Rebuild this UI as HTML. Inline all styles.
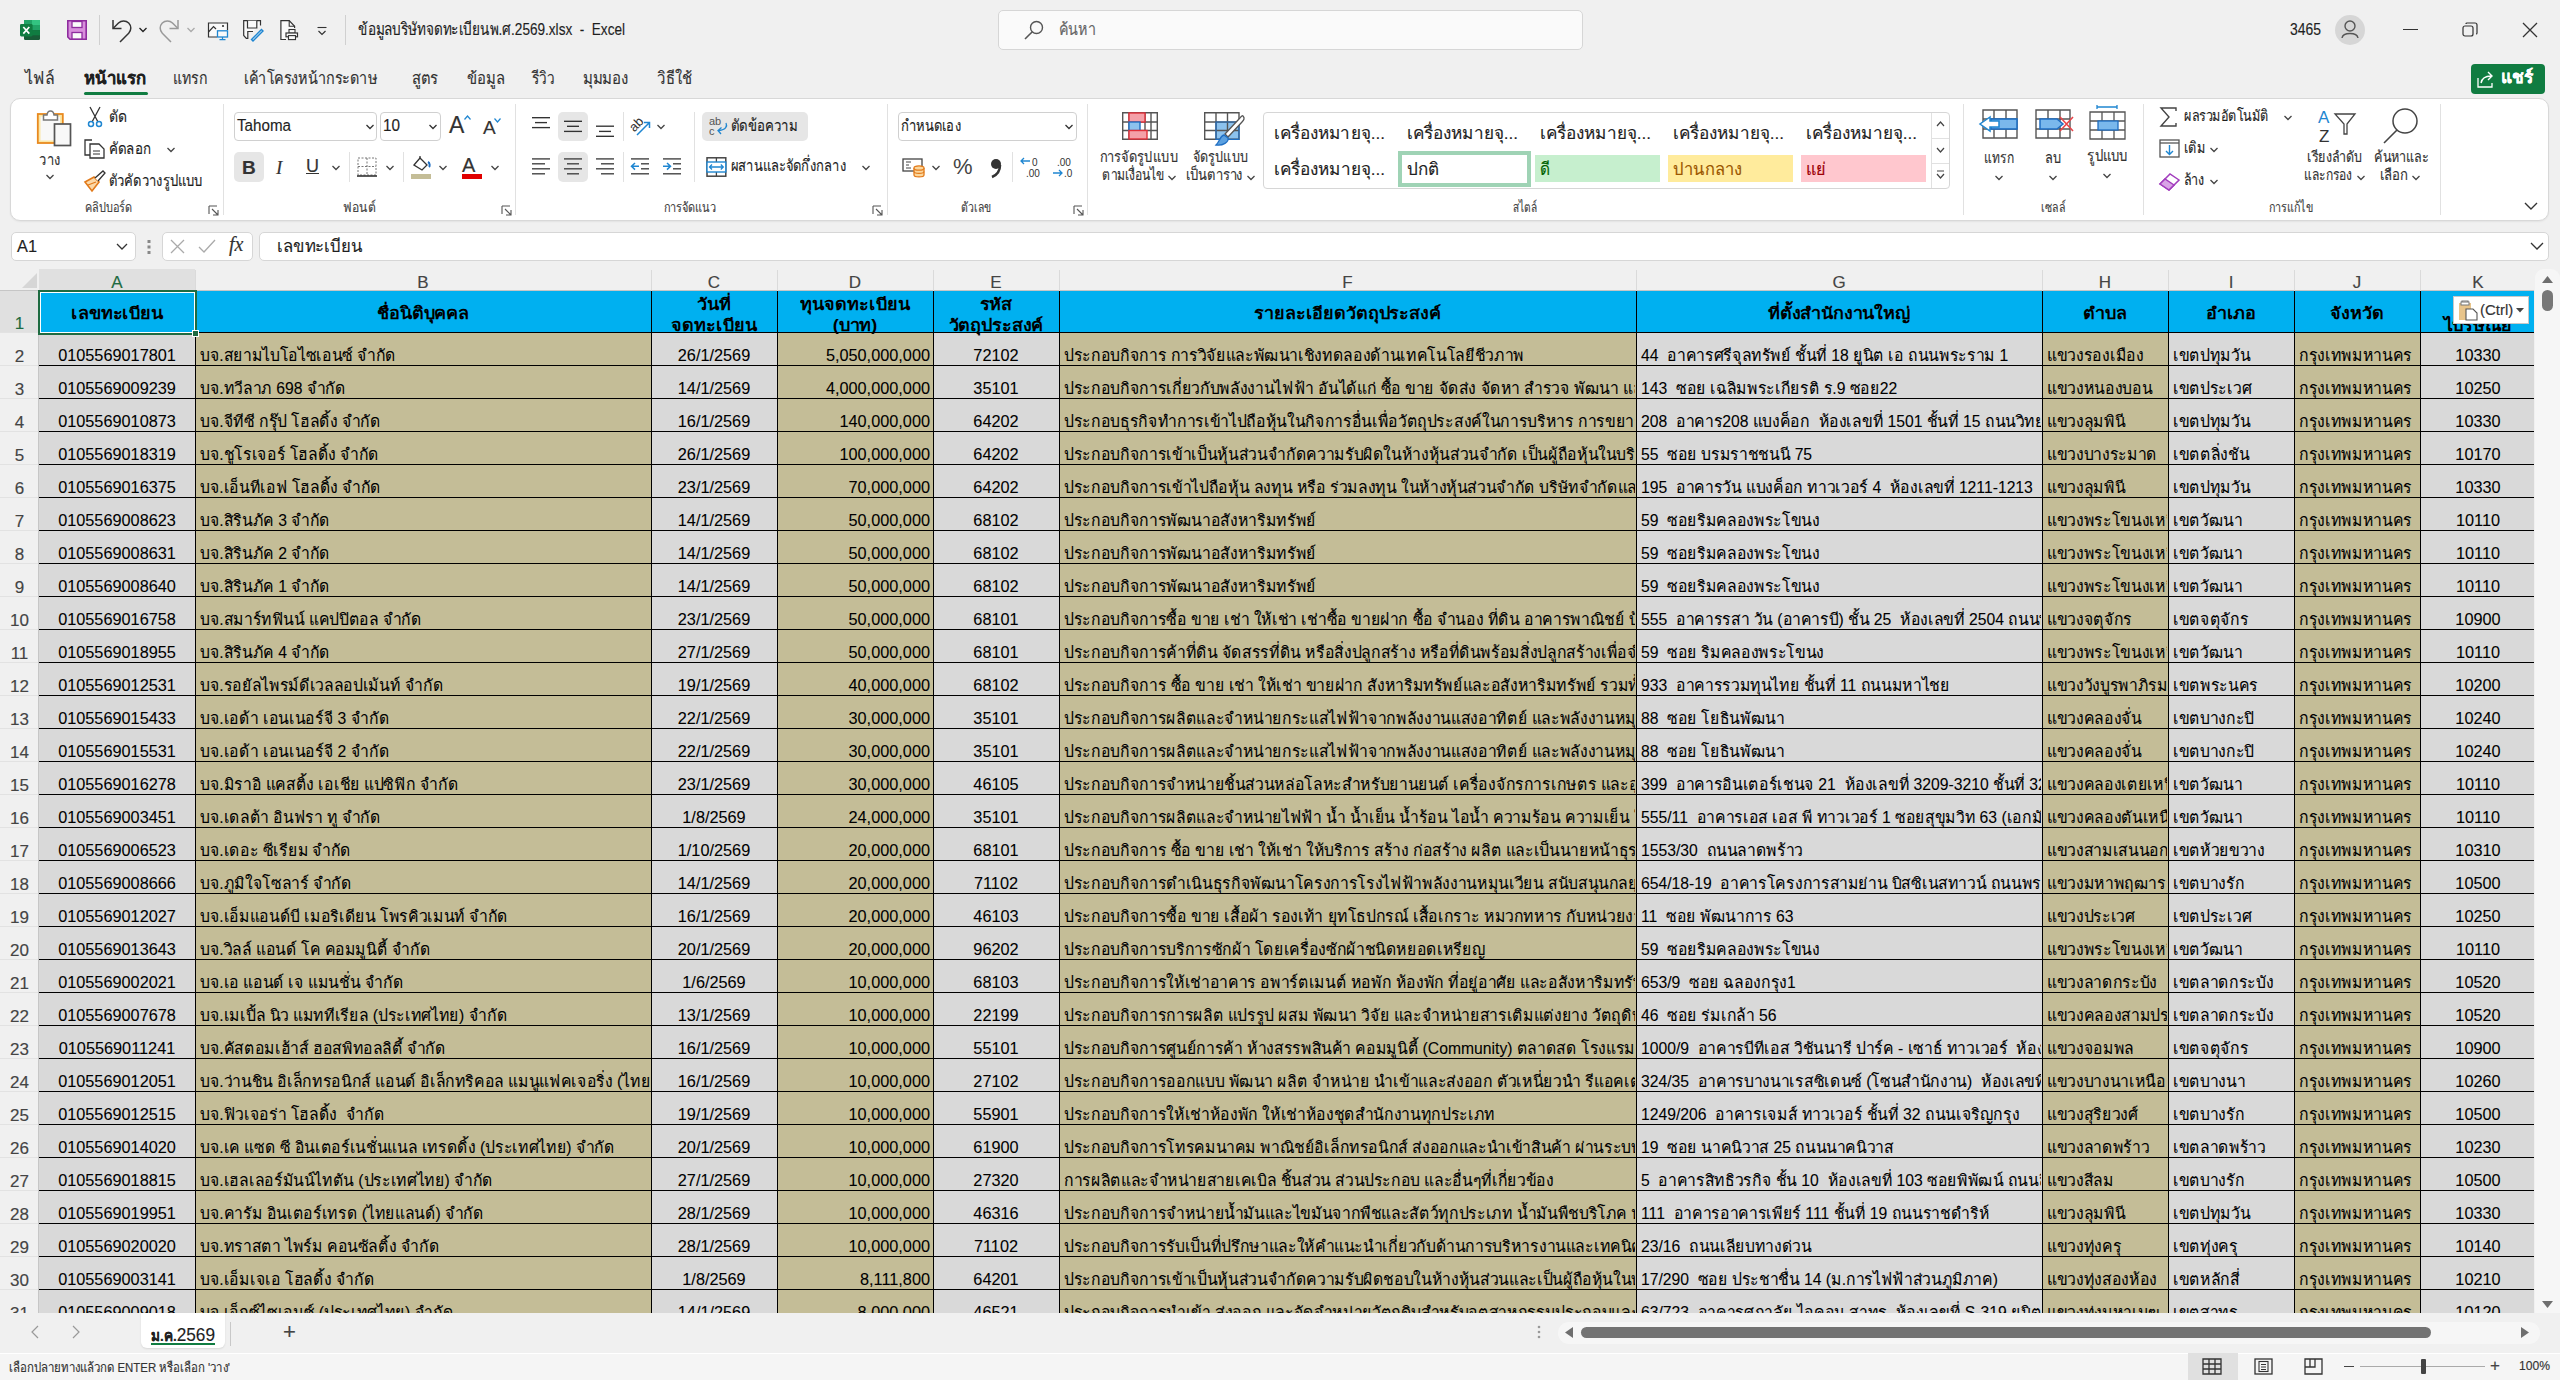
<!DOCTYPE html><html><head><meta charset="utf-8"><style>
*{box-sizing:border-box;margin:0;padding:0}
html,body{width:2560px;height:1380px;overflow:hidden;background:#f0f0f0;font-family:"Liberation Sans", sans-serif;color:#1f1f1f}
.ab{position:absolute}
.t{position:absolute;white-space:nowrap;line-height:1;-webkit-text-stroke:0.15px currentColor}
.grid{position:absolute;left:0;top:0;width:2560px;height:1380px;overflow:hidden}
.c{position:absolute;overflow:hidden;white-space:nowrap;font-size:16.3px;line-height:1;color:#000;padding:0 3px}
.c span{position:absolute;bottom:2px;white-space:pre;-webkit-text-stroke:0.08px #000}
svg{position:absolute;overflow:visible}

</style></head><body>
<svg style="left:20px;top:20px;" width="21" height="20" viewBox="0 0 21 20"><rect x="4" y="0" width="16" height="20" rx="1.2" fill="#185c37"/><rect x="4" y="0" width="16" height="5" fill="#33c481"/><rect x="4" y="0" width="8" height="5" fill="#21a366"/><rect x="4" y="5" width="16" height="5.3" fill="#21a366"/><rect x="4" y="10.3" width="16" height="5" fill="#107c41"/><rect x="0" y="4" width="12.6" height="12.4" rx="1.3" fill="#107c41"/><path d="M3.3 7 L9.3 13.6 M9.3 7 L3.3 13.6" stroke="#fff" stroke-width="1.7"/></svg>
<svg style="left:67px;top:20px;" width="20" height="20" viewBox="0 0 20 20"><path d="M0.8 0.8 H19.2 V19.2 H3 L0.8 17 Z" fill="#d88fdc" stroke="#8e2c9e" stroke-width="1.6"/><rect x="5" y="1.5" width="10" height="6" fill="#fafafa" stroke="#8e2c9e" stroke-width="1.3"/><rect x="5" y="12.5" width="10" height="6.5" fill="#fafafa" stroke="#8e2c9e" stroke-width="1.3"/></svg>
<div class="ab" style="left:99px;top:15px;width:1px;height:30px;background:#d0d0d0"></div>
<svg style="left:110px;top:18px;" width="24" height="24" viewBox="0 0 24 24"><path d="M3 2 V10.5 H11.5" fill="none" stroke="#333" stroke-width="1.5"/><path d="M3.5 10 L8.5 5 A7.2 7.2 0 0 1 18.7 15.2 L10 24" fill="none" stroke="#333" stroke-width="1.5"/></svg>
<svg style="left:138px;top:27px;" width="10" height="6" viewBox="0 0 10 6"><path d="M1.5 1 L5 4.5 L8.5 1" fill="none" stroke="#222" stroke-width="1.3"/></svg>
<svg style="left:157px;top:18px;" width="24" height="24" viewBox="0 0 24 24"><path d="M21 2 V10.5 H12.5" fill="none" stroke="#999" stroke-width="1.5"/><path d="M20.5 10 L15.5 5 A7.2 7.2 0 0 0 5.3 15.2 L14 24" fill="none" stroke="#999" stroke-width="1.5"/></svg>
<svg style="left:186px;top:27px;" width="10" height="6" viewBox="0 0 10 6"><path d="M1.5 1 L5 4.5 L8.5 1" fill="none" stroke="#aaa" stroke-width="1.3"/></svg>
<svg style="left:207px;top:20px;" width="22" height="21" viewBox="0 0 22 21"><path d="M10 17 H1.5 V3 H20.5 V10" fill="#fafafa" stroke="#333" stroke-width="1.2"/><path d="M1.5 12 L6.5 6.5 L9 9" fill="none" stroke="#333" stroke-width="1.2"/><circle cx="16" cy="6" r="1.1" fill="#333"/><rect x="10.5" y="10.8" width="10" height="6.2" fill="#fafafa" stroke="#1f86d1" stroke-width="1.3"/><path d="M15.5 17 V19.3 M12.5 19.6 H18.5" stroke="#1f86d1" stroke-width="1.2"/></svg>
<svg style="left:243px;top:20px;" width="21" height="21" viewBox="0 0 21 21"><path d="M17.5 5.5 V0.7 H0.7 V15.5 L3.3 18.3 H4.8 V11.5 H10" fill="#fafafa" stroke="#333" stroke-width="1.2"/><path d="M4.5 0.7 V8 H13.8 V0.7" fill="#fafafa" stroke="#333" stroke-width="1.2"/><path d="M8.5 19.5 L18.5 9.5 L20 11 L10 21 Z" fill="#cfe6f7" stroke="#1f86d1" stroke-width="1.4"/></svg>
<svg style="left:280px;top:20px;" width="19" height="21" viewBox="0 0 19 21"><path d="M6 19.5 H0.9 V0.6 H9.2 L14.6 6.3 V8" fill="#fafafa" stroke="#333" stroke-width="1.2"/><path d="M9.2 0.6 V6.3 H14.6" fill="none" stroke="#333" stroke-width="1.1"/><rect x="9" y="9.5" width="6" height="3.7" fill="#fafafa" stroke="#333" stroke-width="1.1"/><rect x="6" y="13" width="11.5" height="3.8" fill="#fafafa" stroke="#333" stroke-width="1.2"/><rect x="8.5" y="15.6" width="7" height="4" fill="#fafafa" stroke="#333" stroke-width="1.1"/></svg>
<svg style="left:317px;top:26px;" width="10" height="10" viewBox="0 0 10 10"><path d="M0.5 1.5 H9.5" stroke="#333" stroke-width="1.1"/><path d="M1.5 5 L5 8.5 L8.5 5" fill="none" stroke="#333" stroke-width="1.2"/></svg>
<div class="ab" style="left:345px;top:15px;width:1px;height:30px;background:#d0d0d0"></div>
<div id="t1" class="t" style="left:358px;top:21px;font-size:17px;color:#1f1f1f;font-weight:normal;transform:scaleX(0.7985);transform-origin:0 0;">ข้อมูลบริษัทจดทะเบียนพ.ศ.2569.xlsx&nbsp; -&nbsp; Excel</div>
<div class="ab" style="left:998px;top:10px;width:585px;height:40px;background:#fafafa;border:1px solid #d6d6d6;border-radius:5px"></div>
<svg style="left:1024px;top:20px;" width="20" height="20" viewBox="0 0 20 20"><circle cx="12.5" cy="7.5" r="6" fill="none" stroke="#555" stroke-width="1.4"/><path d="M8.3 11.7 L1 19" stroke="#555" stroke-width="1.6"/></svg>
<div id="t2" class="t" style="left:1059px;top:21px;font-size:17px;color:#666;font-weight:normal;transform:scaleX(0.8409);transform-origin:0 0;">ค้นหา</div>
<div id="t3" class="t" style="left:2290px;top:21px;font-size:17px;color:#1f1f1f;font-weight:normal;transform:scaleX(0.8195);transform-origin:0 0;">3465</div>
<svg style="left:2335px;top:15px;" width="30" height="30" viewBox="0 0 30 30"><circle cx="15" cy="15" r="15" fill="#d6d6d6"/><circle cx="15" cy="11" r="5" fill="none" stroke="#555" stroke-width="1.4"/><path d="M7 23 C8 17 22 17 23 23" fill="none" stroke="#555" stroke-width="1.4"/></svg>
<div class="ab" style="left:2403px;top:29px;width:15px;height:1.2px;background:#333"></div>
<svg style="left:2462px;top:22px;" width="16" height="16" viewBox="0 0 16 16"><rect x="1" y="4" width="10" height="10" rx="2" fill="none" stroke="#333" stroke-width="1.2"/><path d="M4 2 Q4 1 5 1 H13 Q15 1 15 3 V11 Q15 12 14 12" fill="none" stroke="#333" stroke-width="1.2"/></svg>
<svg style="left:2522px;top:22px;" width="16" height="16" viewBox="0 0 16 16"><path d="M1 1 L15 15 M15 1 L1 15" stroke="#333" stroke-width="1.3"/></svg>
<div id="t4" class="t" style="left:25px;top:70px;font-size:17px;color:#333;font-weight:normal;transform:scaleX(0.9354);transform-origin:0 0;">ไฟล์</div>
<div id="t5" class="t" style="left:84px;top:70px;font-size:17px;color:#1f1f1f;font-weight:bold;transform:scaleX(0.9841);transform-origin:0 0;">หน้าแรก</div>
<div id="t6" class="t" style="left:173px;top:70px;font-size:17px;color:#333;font-weight:normal;transform:scaleX(0.8293);transform-origin:0 0;">แทรก</div>
<div id="t7" class="t" style="left:244px;top:70px;font-size:17px;color:#333;font-weight:normal;transform:scaleX(0.8471);transform-origin:0 0;">เค้าโครงหน้ากระดาษ</div>
<div id="t8" class="t" style="left:412px;top:70px;font-size:17px;color:#333;font-weight:normal;transform:scaleX(0.8667);transform-origin:0 0;">สูตร</div>
<div id="t9" class="t" style="left:467px;top:70px;font-size:17px;color:#333;font-weight:normal;transform:scaleX(0.8721);transform-origin:0 0;">ข้อมูล</div>
<div id="t10" class="t" style="left:532px;top:70px;font-size:17px;color:#333;font-weight:normal;transform:scaleX(0.7931);transform-origin:0 0;">รีวิว</div>
<div id="t11" class="t" style="left:583px;top:70px;font-size:17px;color:#333;font-weight:normal;transform:scaleX(0.8823);transform-origin:0 0;">มุมมอง</div>
<div id="t12" class="t" style="left:657px;top:70px;font-size:17px;color:#333;font-weight:normal;transform:scaleX(0.8750);transform-origin:0 0;">วิธีใช้</div>
<div class="ab" style="left:84px;top:92px;width:64px;height:3px;background:#107c41;border-radius:2px"></div>
<div class="ab" style="left:2471px;top:64px;width:74px;height:30px;background:#107c41;border-radius:4px"></div>
<svg style="left:2477px;top:71px;" width="18" height="17" viewBox="0 0 18 17"><path d="M1 7 V16 H15 V12" fill="none" stroke="#fff" stroke-width="1.3"/><path d="M4 12 C5 7 9 5 14 5 M11 1 L15 5 L11 9" fill="none" stroke="#fff" stroke-width="1.4"/></svg>
<div id="t13" class="t" style="left:2501px;top:69px;font-size:17px;color:#fff;font-weight:bold;transform:scaleX(1.0156);transform-origin:0 0;">แชร์</div>
<div class="ab" style="left:10px;top:98px;width:2539px;height:123px;background:#fff;border:1px solid #d8d8d8;border-radius:10px;box-shadow:0 1px 2px rgba(0,0,0,0.06)"></div>
<div class="ab" style="left:223px;top:104px;width:1px;height:111px;background:#e1e1e1"></div>
<div class="ab" style="left:515px;top:104px;width:1px;height:111px;background:#e1e1e1"></div>
<div class="ab" style="left:887px;top:104px;width:1px;height:111px;background:#e1e1e1"></div>
<div class="ab" style="left:1087px;top:104px;width:1px;height:111px;background:#e1e1e1"></div>
<div class="ab" style="left:1963px;top:104px;width:1px;height:111px;background:#e1e1e1"></div>
<div class="ab" style="left:2143px;top:104px;width:1px;height:111px;background:#e1e1e1"></div>
<div class="ab" style="left:2440px;top:104px;width:1px;height:111px;background:#e1e1e1"></div>
<div class="t" style="left:8.0px;top:200px;width:200px;text-align:center;font-size:14px;color:#444;font-weight:normal;"><span id="t14" style="display:inline-block;transform:scaleX(0.7787);transform-origin:50% 0">คลิปบอร์ด</span></div>
<div class="t" style="left:259.0px;top:200px;width:200px;text-align:center;font-size:14px;color:#444;font-weight:normal;"><span id="t15" style="display:inline-block;transform:scaleX(0.8649);transform-origin:50% 0">ฟอนต์</span></div>
<div class="t" style="left:590.0px;top:200px;width:200px;text-align:center;font-size:14px;color:#444;font-weight:normal;"><span id="t16" style="display:inline-block;transform:scaleX(0.7794);transform-origin:50% 0">การจัดแนว</span></div>
<div class="t" style="left:876.0px;top:200px;width:200px;text-align:center;font-size:14px;color:#444;font-weight:normal;"><span id="t17" style="display:inline-block;transform:scaleX(0.7439);transform-origin:50% 0">ตัวเลข</span></div>
<div class="t" style="left:1425.0px;top:200px;width:200px;text-align:center;font-size:14px;color:#444;font-weight:normal;"><span id="t18" style="display:inline-block;transform:scaleX(0.7205);transform-origin:50% 0">สไตล์</span></div>
<div class="t" style="left:1953.0px;top:200px;width:200px;text-align:center;font-size:14px;color:#444;font-weight:normal;"><span id="t19" style="display:inline-block;transform:scaleX(0.7576);transform-origin:50% 0">เซลล์</span></div>
<div class="t" style="left:2191.0px;top:200px;width:200px;text-align:center;font-size:14px;color:#444;font-weight:normal;"><span id="t20" style="display:inline-block;transform:scaleX(0.7673);transform-origin:50% 0">การแก้ไข</span></div>
<svg style="left:208px;top:205px;" width="11" height="11" viewBox="0 0 11 11"><path d="M1 1 H9 M1 1 V9" stroke="#555" stroke-width="1.1" fill="none"/><path d="M4 4 L10 10 M10 5 V10 H5" stroke="#555" stroke-width="1.1" fill="none"/></svg>
<svg style="left:501px;top:205px;" width="11" height="11" viewBox="0 0 11 11"><path d="M1 1 H9 M1 1 V9" stroke="#555" stroke-width="1.1" fill="none"/><path d="M4 4 L10 10 M10 5 V10 H5" stroke="#555" stroke-width="1.1" fill="none"/></svg>
<svg style="left:872px;top:205px;" width="11" height="11" viewBox="0 0 11 11"><path d="M1 1 H9 M1 1 V9" stroke="#555" stroke-width="1.1" fill="none"/><path d="M4 4 L10 10 M10 5 V10 H5" stroke="#555" stroke-width="1.1" fill="none"/></svg>
<svg style="left:1073px;top:205px;" width="11" height="11" viewBox="0 0 11 11"><path d="M1 1 H9 M1 1 V9" stroke="#555" stroke-width="1.1" fill="none"/><path d="M4 4 L10 10 M10 5 V10 H5" stroke="#555" stroke-width="1.1" fill="none"/></svg>
<svg style="left:34px;top:106px;" width="40" height="46" viewBox="0 0 40 46"><rect x="3.8" y="8" width="25" height="29" fill="#fbe7a6" stroke="#e8891f" stroke-width="1.8"/><rect x="6.5" y="10.5" width="19.5" height="24" fill="#f8f8f8"/><path d="M9.5 14 V9 H13 C13.5 3.5 19.5 3.5 20 9 H23.5 V14 Z" fill="#fff" stroke="#777" stroke-width="1.5"/><rect x="20.5" y="18" width="16" height="21.5" fill="#f8f8f8" stroke="#555" stroke-width="1.7"/></svg>
<div class="t" style="left:-50.0px;top:152px;width:200px;text-align:center;font-size:16px;color:#333;font-weight:normal;"><span id="t21" style="display:inline-block;transform:scaleX(0.8077);transform-origin:50% 0">วาง</span></div>
<svg style="left:45px;top:174px;" width="10" height="6" viewBox="0 0 10 6"><path d="M1.5 1 L5 4.5 L8.5 1" fill="none" stroke="#444" stroke-width="1.3"/></svg>
<svg style="left:87px;top:106px;" width="16" height="22" viewBox="0 0 16 22"><path d="M3 1 L11 16 M13 1 L5 16" stroke="#333" stroke-width="1.3"/><circle cx="4" cy="18" r="2.5" fill="none" stroke="#1f86d1" stroke-width="1.5"/><circle cx="12" cy="18" r="2.5" fill="none" stroke="#1f86d1" stroke-width="1.5"/></svg>
<div id="t22" class="t" style="left:109px;top:109px;font-size:16px;color:#1f1f1f;font-weight:normal;transform:scaleX(0.8750);transform-origin:0 0;">ตัด</div>
<svg style="left:84px;top:139px;" width="21" height="20" viewBox="0 0 21 20"><path d="M7 16 H1 V1 H8" fill="none" stroke="#333" stroke-width="1.3"/><path d="M6 5 H15 L20 10 V19 H6 Z" fill="#fff" stroke="#333" stroke-width="1.3"/><path d="M9 12 H16 M9 15 H16" stroke="#333" stroke-width="1"/></svg>
<div id="t23" class="t" style="left:109px;top:141px;font-size:16px;color:#1f1f1f;font-weight:normal;transform:scaleX(0.8333);transform-origin:0 0;">คัดลอก</div>
<svg style="left:166px;top:147px;" width="10" height="6" viewBox="0 0 10 6"><path d="M1.5 1 L5 4.5 L8.5 1" fill="none" stroke="#444" stroke-width="1.3"/></svg>
<svg style="left:84px;top:170px;" width="22" height="22" viewBox="0 0 22 22"><path d="M1 12 L10 7 L15 12 L8 21 Z" fill="#fcd9a8" stroke="#e27a1a" stroke-width="1.6"/><path d="M4 15 L12 12" stroke="#e27a1a" stroke-width="1.2"/><path d="M11 8 L19 1 L21 3 L14 11" fill="#fff" stroke="#333" stroke-width="1.3"/></svg>
<div id="t24" class="t" style="left:109px;top:173px;font-size:16px;color:#1f1f1f;font-weight:normal;transform:scaleX(0.8131);transform-origin:0 0;">ตัวคัดวางรูปแบบ</div>
<div class="ab" style="left:234px;top:112px;width:143px;height:29px;background:#fff;border:1px solid #d0d0d0;border-radius:4px"></div>
<div id="t25" class="t" style="left:237px;top:118px;font-size:16px;color:#1f1f1f;font-weight:normal;transform:scaleX(0.9487);transform-origin:0 0;">Tahoma</div>
<svg style="left:365px;top:124px;" width="10" height="6" viewBox="0 0 10 6"><path d="M1.5 1 L5 4.5 L8.5 1" fill="none" stroke="#333" stroke-width="1.3"/></svg>
<div class="ab" style="left:380px;top:112px;width:61px;height:29px;background:#fff;border:1px solid #d0d0d0;border-radius:4px"></div>
<div id="t26" class="t" style="left:383px;top:118px;font-size:16px;color:#1f1f1f;font-weight:normal;transform:scaleX(0.9552);transform-origin:0 0;">10</div>
<svg style="left:428px;top:124px;" width="10" height="6" viewBox="0 0 10 6"><path d="M1.5 1 L5 4.5 L8.5 1" fill="none" stroke="#333" stroke-width="1.3"/></svg>
<div id="t27" class="t" style="left:449px;top:114px;font-size:23px;color:#333;font-weight:normal;">A</div>
<svg style="left:464px;top:115px;" width="7" height="5" viewBox="0 0 7 5"><path d="M0.5 4.5 L3.5 1 L6.5 4.5" fill="none" stroke="#1f86d1" stroke-width="1.2"/></svg>
<div id="t28" class="t" style="left:483px;top:118px;font-size:19px;color:#333;font-weight:normal;">A</div>
<svg style="left:494px;top:118px;" width="7" height="5" viewBox="0 0 7 5"><path d="M0.5 0.5 L3.5 4 L6.5 0.5" fill="none" stroke="#1f86d1" stroke-width="1.2"/></svg>
<div class="ab" style="left:234px;top:152px;width:30px;height:30px;background:#e6e6e6;border-radius:5px"></div>
<div id="t29" class="t" style="left:242px;top:158px;font-size:19px;color:#333;font-weight:bold;">B</div>
<div id="t30" class="t" style="left:276px;top:158px;font-size:19px;color:#333;font-weight:normal;font-style:italic;font-family:'Liberation Serif',serif">I</div>
<div id="t31" class="t" style="left:306px;top:157px;font-size:18px;color:#333;font-weight:normal;text-decoration:underline">U</div>
<svg style="left:331px;top:165px;" width="10" height="6" viewBox="0 0 10 6"><path d="M1.5 1 L5 4.5 L8.5 1" fill="none" stroke="#444" stroke-width="1.3"/></svg>
<div class="ab" style="left:349px;top:152px;width:1px;height:30px;background:#e1e1e1"></div>
<svg style="left:357px;top:157px;" width="20" height="20" viewBox="0 0 20 20"><rect x="1" y="1" width="18" height="17" fill="none" stroke="#777" stroke-width="1" stroke-dasharray="2 1.5"/><path d="M10 1 V18 M1 9.5 H19" stroke="#777" stroke-width="1" stroke-dasharray="2 1.5"/><path d="M0 19 H20" stroke="#333" stroke-width="1.6"/></svg>
<svg style="left:385px;top:165px;" width="10" height="6" viewBox="0 0 10 6"><path d="M1.5 1 L5 4.5 L8.5 1" fill="none" stroke="#444" stroke-width="1.3"/></svg>
<div class="ab" style="left:403px;top:152px;width:1px;height:30px;background:#e1e1e1"></div>
<svg style="left:411px;top:155px;" width="22" height="19" viewBox="0 0 22 19"><path d="M3 10 L9 3 L16 10 L11 15 Z" fill="#fff" stroke="#333" stroke-width="1.3"/><path d="M9 3 V1" stroke="#333" stroke-width="1.3"/><path d="M17 7 C19 8 19 11 18 12" fill="none" stroke="#1f6ec2" stroke-width="2"/></svg>
<div class="ab" style="left:411px;top:174px;width:20px;height:5px;background:#c4bd97"></div>
<svg style="left:438px;top:165px;" width="10" height="6" viewBox="0 0 10 6"><path d="M1.5 1 L5 4.5 L8.5 1" fill="none" stroke="#444" stroke-width="1.3"/></svg>
<div id="t32" class="t" style="left:462px;top:155px;font-size:20px;color:#333;font-weight:normal;">A</div>
<div class="ab" style="left:462px;top:174px;width:20px;height:5px;background:#e00000"></div>
<svg style="left:490px;top:165px;" width="10" height="6" viewBox="0 0 10 6"><path d="M1.5 1 L5 4.5 L8.5 1" fill="none" stroke="#444" stroke-width="1.3"/></svg>
<div class="ab" style="left:558px;top:112px;width:30px;height:29px;background:#e6e6e6;border-radius:5px"></div>
<svg style="left:0px;top:0px;pointer-events:none" width="2560" height="1380" viewBox="0 0 2560 1380"><path d="M532 117.7 H550" stroke="#333" stroke-width="1.35"/><path d="M535 122.6 H547" stroke="#333" stroke-width="1.35"/><path d="M532 127.6 H550" stroke="#333" stroke-width="1.35"/><path d="M564 121.3 H582" stroke="#333" stroke-width="1.35"/><path d="M567 126.3 H579" stroke="#333" stroke-width="1.35"/><path d="M564 131.4 H582" stroke="#333" stroke-width="1.35"/><path d="M596 126.2 H614" stroke="#333" stroke-width="1.35"/><path d="M599 131.4 H611" stroke="#333" stroke-width="1.35"/><path d="M596 136.3 H614" stroke="#333" stroke-width="1.35"/></svg>
<div class="ab" style="left:623px;top:112px;width:1px;height:29px;background:#e1e1e1"></div>
<svg style="left:628px;top:112px;" width="26" height="26" viewBox="0 0 26 26"><g transform="rotate(-45 9 12)"><text x="1" y="16" font-size="13" font-family="Liberation Sans" fill="#333" style="-webkit-text-stroke:0">ab</text></g><path d="M9 23 L21.5 10.5 M16 10.5 H21.5 V16" fill="none" stroke="#1f86d1" stroke-width="1.5"/></svg>
<svg style="left:656px;top:124px;" width="10" height="6" viewBox="0 0 10 6"><path d="M1.5 1 L5 4.5 L8.5 1" fill="none" stroke="#444" stroke-width="1.3"/></svg>
<div class="ab" style="left:694px;top:112px;width:1px;height:70px;background:#e1e1e1"></div>
<div class="ab" style="left:702px;top:112px;width:106px;height:29px;background:#e6e6e6;border-radius:5px"></div>
<svg style="left:709px;top:116px;" width="20" height="20" viewBox="0 0 20 20"><text x="0" y="9" font-size="11" font-family="Liberation Sans" fill="#555" style="-webkit-text-stroke:0">ab</text><text x="0" y="19" font-size="11" font-family="Liberation Sans" fill="#555" style="-webkit-text-stroke:0">c</text><path d="M17 7 C18.5 10 17 14 10 14.5 M12.5 11.5 L9 14.5 L12 18" fill="none" stroke="#1f86d1" stroke-width="1.3"/></svg>
<div id="t33" class="t" style="left:731px;top:118px;font-size:16px;color:#1f1f1f;font-weight:normal;transform:scaleX(0.8271);transform-origin:0 0;">ตัดข้อความ</div>
<div class="ab" style="left:558px;top:152px;width:30px;height:30px;background:#e6e6e6;border-radius:5px"></div>
<svg style="left:0px;top:0px;pointer-events:none" width="2560" height="1380" viewBox="0 0 2560 1380"><path d="M532 158.9 H550" stroke="#444" stroke-width="1.4"/><path d="M532 163.8 H545" stroke="#444" stroke-width="1.4"/><path d="M532 168.8 H550" stroke="#444" stroke-width="1.4"/><path d="M532 173.8 H545" stroke="#444" stroke-width="1.4"/><path d="M564 158.9 H582" stroke="#444" stroke-width="1.4"/><path d="M567 163.8 H579" stroke="#444" stroke-width="1.4"/><path d="M564 168.8 H582" stroke="#444" stroke-width="1.4"/><path d="M567 173.8 H579" stroke="#444" stroke-width="1.4"/><path d="M596 158.9 H614" stroke="#444" stroke-width="1.4"/><path d="M601 163.8 H614" stroke="#444" stroke-width="1.4"/><path d="M596 168.8 H614" stroke="#444" stroke-width="1.4"/><path d="M601 173.8 H614" stroke="#444" stroke-width="1.4"/><path d="M631 158.9 H649" stroke="#444" stroke-width="1.4"/><path d="M641 163.8 H649" stroke="#444" stroke-width="1.4"/><path d="M641 168.8 H649" stroke="#444" stroke-width="1.4"/><path d="M631 173.8 H649" stroke="#444" stroke-width="1.4"/><path d="M663 158.9 H681" stroke="#444" stroke-width="1.4"/><path d="M673 163.8 H681" stroke="#444" stroke-width="1.4"/><path d="M673 168.8 H681" stroke="#444" stroke-width="1.4"/><path d="M663 173.8 H681" stroke="#444" stroke-width="1.4"/></svg>
<div class="ab" style="left:623px;top:152px;width:1px;height:30px;background:#e1e1e1"></div>
<svg style="left:630px;top:161px;" width="10" height="10" viewBox="0 0 10 10"><path d="M9 5.3 H2 M5 2 L1.5 5.3 L5 8.6" fill="none" stroke="#1f86d1" stroke-width="1.5"/></svg>
<svg style="left:662px;top:161px;" width="10" height="10" viewBox="0 0 10 10"><path d="M1 5.3 H8 M5 2 L8.5 5.3 L5 8.6" fill="none" stroke="#1f86d1" stroke-width="1.5"/></svg>
<svg style="left:706px;top:157px;" width="21" height="20" viewBox="0 0 21 20"><rect x="1" y="0.8" width="18.8" height="18.4" fill="#fff" stroke="#444" stroke-width="1.5"/><path d="M10.4 0.8 V5 M10.4 15 V19" stroke="#444" stroke-width="1.3"/><rect x="1" y="5" width="18.8" height="10" fill="#fff" stroke="#1f86d1" stroke-width="1.4"/><path d="M3.5 10 H17.3 M6 7.5 L3.5 10 L6 12.5 M14.8 7.5 L17.3 10 L14.8 12.5" fill="none" stroke="#1f86d1" stroke-width="1.3"/></svg>
<div id="t34" class="t" style="left:731px;top:158px;font-size:16px;color:#1f1f1f;font-weight:normal;transform:scaleX(0.8098);transform-origin:0 0;">ผสานและจัดกึ่งกลาง</div>
<svg style="left:861px;top:165px;" width="10" height="6" viewBox="0 0 10 6"><path d="M1.5 1 L5 4.5 L8.5 1" fill="none" stroke="#444" stroke-width="1.3"/></svg>
<div class="ab" style="left:898px;top:112px;width:179px;height:29px;background:#fff;border:1px solid #d0d0d0;border-radius:4px"></div>
<div id="t35" class="t" style="left:901px;top:118px;font-size:16px;color:#1f1f1f;font-weight:normal;transform:scaleX(0.8108);transform-origin:0 0;">กำหนดเอง</div>
<svg style="left:1064px;top:124px;" width="10" height="6" viewBox="0 0 10 6"><path d="M1.5 1 L5 4.5 L8.5 1" fill="none" stroke="#333" stroke-width="1.3"/></svg>
<svg style="left:902px;top:156px;" width="24" height="22" viewBox="0 0 24 22"><rect x="1" y="3" width="19" height="12" fill="#fff" stroke="#444" stroke-width="1.3"/><path d="M4 6 H9 M4 9 H7 M4 12 H9" stroke="#444" stroke-width="1"/><path d="M12 12 V19 C12 21.5 22 21.5 22 19 V12" fill="#fbd79d" stroke="#e27a1a" stroke-width="1.3"/><ellipse cx="17" cy="12" rx="5" ry="2.2" fill="#fbd79d" stroke="#e27a1a" stroke-width="1.3"/><path d="M12 15.5 C12 18 22 18 22 15.5" fill="none" stroke="#e27a1a" stroke-width="1.1"/></svg>
<svg style="left:931px;top:165px;" width="10" height="6" viewBox="0 0 10 6"><path d="M1.5 1 L5 4.5 L8.5 1" fill="none" stroke="#444" stroke-width="1.3"/></svg>
<div id="t36" class="t" style="left:953px;top:156px;font-size:22px;color:#444;font-weight:normal;-webkit-text-stroke:0">%</div>
<svg style="left:989px;top:158px;" width="14" height="20" viewBox="0 0 14 20"><circle cx="7" cy="6" r="5" fill="#333"/><path d="M11 7 C11 13 8 17 3 19" fill="none" stroke="#333" stroke-width="2.6"/></svg>
<div class="ab" style="left:1012px;top:152px;width:1px;height:30px;background:#e1e1e1"></div>
<svg style="left:1020px;top:156px;" width="22" height="22" viewBox="0 0 22 22"><path d="M10 5 H1 M4 2 L1 5 L4 8" fill="none" stroke="#1f86d1" stroke-width="1.3"/><text x="12" y="10" font-size="10" font-family="Liberation Sans" fill="#333">0</text><text x="6" y="21" font-size="10" font-family="Liberation Sans" fill="#333">.00</text></svg>
<svg style="left:1052px;top:156px;" width="22" height="22" viewBox="0 0 22 22"><text x="5" y="10" font-size="10" font-family="Liberation Sans" fill="#333">.00</text><path d="M1 17 H10 M7 14 L10 17 L7 20" fill="none" stroke="#1f86d1" stroke-width="1.3"/><text x="12" y="21" font-size="10" font-family="Liberation Sans" fill="#333">.0</text></svg>
<svg style="left:1122px;top:112px;" width="36" height="28" viewBox="0 0 36 28"><path d="M0.7 0.7 H35.3 V27.3 H0.7 Z M0.7 10 H35.3 M0.7 18.5 H35.3 M7 0.7 V27.3 M23 0.7 V27.3 M29 0.7 V27.3" fill="none" stroke="#555" stroke-width="1.4"/><rect x="7" y="1" width="16" height="9" fill="#f4a0a8" stroke="#e0303a" stroke-width="1.4"/><rect x="7" y="10" width="11" height="8.5" fill="#8cc2ee" stroke="#1f6ec2" stroke-width="1.4"/><rect x="7" y="18.5" width="18" height="8.5" fill="#f4a0a8" stroke="#e0303a" stroke-width="1.4"/></svg>
<div class="t" style="left:1084.0px;top:149px;width:110px;text-align:center;font-size:15px;color:#333;font-weight:normal;"><span id="t37" style="display:inline-block;transform:scaleX(0.8532);transform-origin:50% 0">การจัดรูปแบบ</span></div>
<div class="t" style="left:1078.0px;top:167px;width:110px;text-align:center;font-size:15px;color:#333;font-weight:normal;"><span id="t38" style="display:inline-block;transform:scaleX(0.8052);transform-origin:50% 0">ตามเงื่อนไข</span></div>
<svg style="left:1167px;top:175px;" width="10" height="6" viewBox="0 0 10 6"><path d="M1.5 1 L5 4.5 L8.5 1" fill="none" stroke="#444" stroke-width="1.3"/></svg>
<svg style="left:1204px;top:112px;" width="42" height="36" viewBox="0 0 42 36"><rect x="12" y="10" width="23" height="17" fill="#8cc2ee"/><path d="M0.7 0.7 H35 V27.3 H0.7 Z M0.7 10 H35 M0.7 18.5 H35 M12 0.7 V27.3 M23.5 0.7 V27.3" fill="none" stroke="#555" stroke-width="1.4"/><path d="M12 10 H35 V27.3 H12 Z" fill="none" stroke="#1f6ec2" stroke-width="1.2"/><path d="M39 4 C41 6 40 8 38 10 L24 25 L21 22 L35 7 C37 5 38 3 39 4 Z" fill="#fff" stroke="#555" stroke-width="1.3"/><path d="M20 23 C16 24 16 29 12 33 C19 34 25 30 24 26 Z" fill="#5aa0e0" stroke="#1f6ec2" stroke-width="1.3"/></svg>
<div class="t" style="left:1165.0px;top:149px;width:110px;text-align:center;font-size:15px;color:#333;font-weight:normal;"><span id="t39" style="display:inline-block;transform:scaleX(0.8358);transform-origin:50% 0">จัดรูปแบบ</span></div>
<div class="t" style="left:1159.0px;top:167px;width:110px;text-align:center;font-size:15px;color:#333;font-weight:normal;"><span id="t40" style="display:inline-block;transform:scaleX(0.8636);transform-origin:50% 0">เป็นตาราง</span></div>
<svg style="left:1246px;top:175px;" width="10" height="6" viewBox="0 0 10 6"><path d="M1.5 1 L5 4.5 L8.5 1" fill="none" stroke="#444" stroke-width="1.3"/></svg>
<div class="ab" style="left:1263px;top:112px;width:687px;height:77px;background:#fff;border:1px solid #d6d6d6;border-radius:4px"></div>
<div class="ab" style="left:1931px;top:113px;width:1px;height:75px;background:#e1e1e1"></div>
<div class="ab" style="left:1932px;top:138px;width:17px;height:1px;background:#e1e1e1"></div>
<div class="ab" style="left:1932px;top:163px;width:17px;height:1px;background:#e1e1e1"></div>
<svg style="left:1936px;top:121px;" width="9" height="6" viewBox="0 0 9 6"><path d="M1 5 L4.5 1 L8 5" fill="none" stroke="#444" stroke-width="1.2"/></svg>
<svg style="left:1936px;top:147px;" width="9" height="6" viewBox="0 0 9 6"><path d="M1 1 L4.5 5 L8 1" fill="none" stroke="#444" stroke-width="1.2"/></svg>
<svg style="left:1936px;top:170px;" width="9" height="10" viewBox="0 0 9 10"><path d="M1 1 H8 M1 4 L4.5 8 L8 4" fill="none" stroke="#444" stroke-width="1.2"/></svg>
<div id="t41" class="t" style="left:1274px;top:125px;font-size:17px;color:#1f1f1f;font-weight:normal;transform:scaleX(1.0075);transform-origin:0 0;">เครื่องหมายจุ...</div>
<div id="t42" class="t" style="left:1407px;top:125px;font-size:17px;color:#1f1f1f;font-weight:normal;transform:scaleX(1.0076);transform-origin:0 0;">เครื่องหมายจุ...</div>
<div id="t43" class="t" style="left:1540px;top:125px;font-size:17px;color:#1f1f1f;font-weight:normal;transform:scaleX(1.0076);transform-origin:0 0;">เครื่องหมายจุ...</div>
<div id="t44" class="t" style="left:1673px;top:125px;font-size:17px;color:#1f1f1f;font-weight:normal;transform:scaleX(1.0076);transform-origin:0 0;">เครื่องหมายจุ...</div>
<div id="t45" class="t" style="left:1806px;top:125px;font-size:17px;color:#1f1f1f;font-weight:normal;transform:scaleX(1.0076);transform-origin:0 0;">เครื่องหมายจุ...</div>
<div id="t46" class="t" style="left:1274px;top:161px;font-size:17px;color:#1f1f1f;font-weight:normal;transform:scaleX(1.0076);transform-origin:0 0;">เครื่องหมายจุ...</div>
<div class="ab" style="left:1398px;top:151px;width:133px;height:36px;background:#fff;border:4px solid #9fd3b5"></div>
<div id="t47" class="t" style="left:1407px;top:161px;font-size:17px;color:#1f1f1f;font-weight:normal;transform:scaleX(1.0000);transform-origin:0 0;">ปกติ</div>
<div class="ab" style="left:1535px;top:155px;width:125px;height:27px;background:#c6efce"></div>
<div id="t48" class="t" style="left:1540px;top:161px;font-size:17px;color:#006100;font-weight:normal;transform:scaleX(0.9091);transform-origin:0 0;">ดี</div>
<div class="ab" style="left:1668px;top:155px;width:125px;height:27px;background:#ffeb9c"></div>
<div id="t49" class="t" style="left:1673px;top:161px;font-size:17px;color:#9c5700;font-weight:normal;transform:scaleX(0.9718);transform-origin:0 0;">ปานกลาง</div>
<div class="ab" style="left:1801px;top:155px;width:125px;height:27px;background:#ffc7ce"></div>
<div id="t50" class="t" style="left:1806px;top:161px;font-size:17px;color:#9c0006;font-weight:normal;transform:scaleX(0.9524);transform-origin:0 0;">แย่</div>
<svg style="left:1977px;top:106px;" width="44" height="34" viewBox="0 0 44 34"><path d="M6 4 H40 V32 H6 Z M6 13 H40 M6 23 H40 M17 4 V32 M29 4 V32" fill="none" stroke="#555" stroke-width="1.4"/><rect x="14" y="13" width="26" height="10" fill="#7ab8ec" stroke="#1f6ec2" stroke-width="1.6"/><path d="M13 11 L3 18 L13 25 V21 H22 V15 H13 Z" fill="#fff" stroke="#1f86d1" stroke-width="1.5"/></svg>
<div class="t" style="left:1959.0px;top:150px;width:80px;text-align:center;font-size:16px;color:#333;font-weight:normal;"><span id="t51" style="display:inline-block;transform:scaleX(0.7500);transform-origin:50% 0">แทรก</span></div>
<svg style="left:1994px;top:175px;" width="10" height="6" viewBox="0 0 10 6"><path d="M1.5 1 L5 4.5 L8.5 1" fill="none" stroke="#444" stroke-width="1.3"/></svg>
<svg style="left:2035px;top:108px;" width="40" height="32" viewBox="0 0 40 32"><path d="M1 2 H35 V30 H1 Z M1 11 H35 M1 21 H35 M13 2 V30 M25 2 V30" fill="none" stroke="#555" stroke-width="1.4"/><path d="M5 11 H22 L28 16 L22 21 H5 Z" fill="#7ab8ec" stroke="#1f6ec2" stroke-width="1.5"/><path d="M25 9 L38 23 M38 9 L25 23" stroke="#e8454a" stroke-width="1.6"/></svg>
<div class="t" style="left:2013.0px;top:150px;width:80px;text-align:center;font-size:16px;color:#333;font-weight:normal;"><span id="t52" style="display:inline-block;transform:scaleX(0.8000);transform-origin:50% 0">ลบ</span></div>
<svg style="left:2048px;top:175px;" width="10" height="6" viewBox="0 0 10 6"><path d="M1.5 1 L5 4.5 L8.5 1" fill="none" stroke="#444" stroke-width="1.3"/></svg>
<svg style="left:2089px;top:105px;" width="38" height="36" viewBox="0 0 38 36"><path d="M8 2 H28 M8 0 V4 M28 0 V4" stroke="#1f86d1" stroke-width="1.3"/><path d="M1 7 H36 V34 H1 Z M1 16 H36 M1 25 H36 M13 7 V34 M25 7 V34" fill="none" stroke="#555" stroke-width="1.3"/><rect x="9" y="16" width="20" height="9" fill="#7ab8ec" stroke="#1f6ec2" stroke-width="1.3"/></svg>
<div class="t" style="left:2067.0px;top:148px;width:80px;text-align:center;font-size:16px;color:#333;font-weight:normal;"><span id="t53" style="display:inline-block;transform:scaleX(0.8164);transform-origin:50% 0">รูปแบบ</span></div>
<svg style="left:2102px;top:173px;" width="10" height="6" viewBox="0 0 10 6"><path d="M1.5 1 L5 4.5 L8.5 1" fill="none" stroke="#444" stroke-width="1.3"/></svg>
<svg style="left:2160px;top:107px;" width="17" height="20" viewBox="0 0 17 20"><path d="M16 4 V1 H1 L9 10 L1 19 H16 V16" fill="none" stroke="#444" stroke-width="1.4"/></svg>
<div id="t54" class="t" style="left:2184px;top:108px;font-size:15px;color:#1f1f1f;font-weight:normal;transform:scaleX(0.8366);transform-origin:0 0;">ผลรวมอัตโนมัติ</div>
<svg style="left:2283px;top:115px;" width="10" height="6" viewBox="0 0 10 6"><path d="M1.5 1 L5 4.5 L8.5 1" fill="none" stroke="#444" stroke-width="1.3"/></svg>
<svg style="left:2159px;top:139px;" width="21" height="19" viewBox="0 0 21 19"><rect x="1" y="1" width="19" height="17" fill="#fff" stroke="#555" stroke-width="1.3"/><path d="M1 4 H20" stroke="#555" stroke-width="1.3"/><path d="M10.5 6 V15 M7 12 L10.5 15.5 L14 12" fill="none" stroke="#1f86d1" stroke-width="1.4"/></svg>
<div id="t55" class="t" style="left:2184px;top:140px;font-size:15px;color:#1f1f1f;font-weight:normal;transform:scaleX(0.8400);transform-origin:0 0;">เติม</div>
<svg style="left:2209px;top:147px;" width="10" height="6" viewBox="0 0 10 6"><path d="M1.5 1 L5 4.5 L8.5 1" fill="none" stroke="#444" stroke-width="1.3"/></svg>
<svg style="left:2159px;top:171px;" width="22" height="20" viewBox="0 0 22 20"><path d="M1 13 L11 3 L20 9 L10 19 Z" fill="#fff" stroke="#a23cbd" stroke-width="1.5"/><path d="M1 13 L6 8 L15 14 L10 19 Z" fill="#d9a3e6" stroke="#a23cbd" stroke-width="1.5"/></svg>
<div id="t56" class="t" style="left:2184px;top:172px;font-size:15px;color:#1f1f1f;font-weight:normal;transform:scaleX(0.8333);transform-origin:0 0;">ล้าง</div>
<svg style="left:2209px;top:179px;" width="10" height="6" viewBox="0 0 10 6"><path d="M1.5 1 L5 4.5 L8.5 1" fill="none" stroke="#444" stroke-width="1.3"/></svg>
<svg style="left:2318px;top:106px;" width="40" height="38" viewBox="0 0 40 38"><text x="0" y="17" font-size="17" font-family="Liberation Sans" fill="#1f86d1">A</text><text x="1" y="36" font-size="17" font-family="Liberation Sans" fill="#333">Z</text><path d="M17 8 H37 L29 18 V28 H26 V18 Z" fill="#fff" stroke="#444" stroke-width="1.3"/></svg>
<div class="t" style="left:2285.0px;top:149px;width:100px;text-align:center;font-size:15px;color:#333;font-weight:normal;"><span id="t57" style="display:inline-block;transform:scaleX(0.8334);transform-origin:50% 0">เรียงลำดับ</span></div>
<div class="t" style="left:2278.0px;top:167px;width:100px;text-align:center;font-size:15px;color:#333;font-weight:normal;"><span id="t58" style="display:inline-block;transform:scaleX(0.8000);transform-origin:50% 0">และกรอง</span></div>
<svg style="left:2356px;top:175px;" width="10" height="6" viewBox="0 0 10 6"><path d="M1.5 1 L5 4.5 L8.5 1" fill="none" stroke="#444" stroke-width="1.3"/></svg>
<svg style="left:2382px;top:108px;" width="38" height="38" viewBox="0 0 38 38"><circle cx="23" cy="13" r="12" fill="none" stroke="#444" stroke-width="1.5"/><path d="M15 22 L2 35" stroke="#444" stroke-width="1.6"/></svg>
<div class="t" style="left:2351.0px;top:149px;width:100px;text-align:center;font-size:15px;color:#333;font-weight:normal;"><span id="t59" style="display:inline-block;transform:scaleX(0.8385);transform-origin:50% 0">ค้นหาและ</span></div>
<div class="t" style="left:2344.0px;top:167px;width:100px;text-align:center;font-size:15px;color:#333;font-weight:normal;"><span id="t60" style="display:inline-block;transform:scaleX(0.8750);transform-origin:50% 0">เลือก</span></div>
<svg style="left:2411px;top:175px;" width="10" height="6" viewBox="0 0 10 6"><path d="M1.5 1 L5 4.5 L8.5 1" fill="none" stroke="#444" stroke-width="1.3"/></svg>
<svg style="left:2524px;top:202px;" width="14" height="8" viewBox="0 0 14 8"><path d="M1 1 L7 7 L13 1" fill="none" stroke="#333" stroke-width="1.4"/></svg>
<div class="ab" style="left:11px;top:232px;width:125px;height:29px;background:#fff;border:1px solid #d6d6d6;border-radius:5px"></div>
<div id="t61" class="t" style="left:17px;top:238px;font-size:17px;color:#1f1f1f;font-weight:normal;transform:scaleX(0.9617);transform-origin:0 0;">A1</div>
<svg style="left:116px;top:243px;" width="12" height="7" viewBox="0 0 12 7"><path d="M1 1 L6 6 L11 1" fill="none" stroke="#333" stroke-width="1.3"/></svg>
<svg style="left:147px;top:240px;" width="4" height="14" viewBox="0 0 4 14"><rect x="0.5" y="0" width="3" height="3" fill="#888"/><rect x="0.5" y="5.5" width="3" height="3" fill="#888"/><rect x="0.5" y="11" width="3" height="3" fill="#888"/></svg>
<div class="ab" style="left:162px;top:232px;width:91px;height:29px;background:#fff;border:1px solid #d6d6d6;border-radius:5px"></div>
<svg style="left:170px;top:239px;" width="15" height="15" viewBox="0 0 15 15"><path d="M1 1 L14 14 M14 1 L1 14" stroke="#aaa" stroke-width="1.3"/></svg>
<svg style="left:198px;top:239px;" width="18" height="14" viewBox="0 0 18 14"><path d="M1 8 L6 13 L17 1" fill="none" stroke="#aaa" stroke-width="1.3"/></svg>
<div id="t62" class="t" style="left:229px;top:234px;font-size:20px;color:#333;font-weight:normal;font-style:italic;font-family:'Liberation Serif',serif">fx</div>
<div class="ab" style="left:259px;top:232px;width:2290px;height:29px;background:#fff;border:1px solid #d6d6d6;border-radius:5px"></div>
<div id="t63" class="t" style="left:277px;top:238px;font-size:17px;color:#1f1f1f;font-weight:normal;transform:scaleX(0.9828);transform-origin:0 0;">เลขทะเบียน</div>
<svg style="left:2530px;top:242px;" width="14" height="8" viewBox="0 0 14 8"><path d="M1 1 L7 7 L13 1" fill="none" stroke="#333" stroke-width="1.3"/></svg>
<div class="ab" style="left:0;top:261px;width:2534px;height:1052px;overflow:hidden">
<div class="ab" style="left:0;top:8px;width:2534px;height:22px;background:#f0f0f0;border-bottom:1px solid #c6c6c6"></div>
<div class="ab" style="left:39px;top:8px;width:156px;height:22px;background:#e0e0e0;border-bottom:1px solid #c6c6c6"></div>
<div class="t" style="left:39px;top:13px;width:156px;text-align:center;font-size:17px;color:#1e6b41">A</div>
<div class="ab" style="left:195px;top:9px;width:1px;height:21px;background:#dadada"></div>
<div class="t" style="left:195px;top:13px;width:456px;text-align:center;font-size:17px;color:#444">B</div>
<div class="ab" style="left:651px;top:9px;width:1px;height:21px;background:#dadada"></div>
<div class="t" style="left:651px;top:13px;width:126px;text-align:center;font-size:17px;color:#444">C</div>
<div class="ab" style="left:777px;top:9px;width:1px;height:21px;background:#dadada"></div>
<div class="t" style="left:777px;top:13px;width:156px;text-align:center;font-size:17px;color:#444">D</div>
<div class="ab" style="left:933px;top:9px;width:1px;height:21px;background:#dadada"></div>
<div class="t" style="left:933px;top:13px;width:126px;text-align:center;font-size:17px;color:#444">E</div>
<div class="ab" style="left:1059px;top:9px;width:1px;height:21px;background:#dadada"></div>
<div class="t" style="left:1059px;top:13px;width:577px;text-align:center;font-size:17px;color:#444">F</div>
<div class="ab" style="left:1636px;top:9px;width:1px;height:21px;background:#dadada"></div>
<div class="t" style="left:1636px;top:13px;width:406px;text-align:center;font-size:17px;color:#444">G</div>
<div class="ab" style="left:2042px;top:9px;width:1px;height:21px;background:#dadada"></div>
<div class="t" style="left:2042px;top:13px;width:126px;text-align:center;font-size:17px;color:#444">H</div>
<div class="ab" style="left:2168px;top:9px;width:1px;height:21px;background:#dadada"></div>
<div class="t" style="left:2168px;top:13px;width:126px;text-align:center;font-size:17px;color:#444">I</div>
<div class="ab" style="left:2294px;top:9px;width:1px;height:21px;background:#dadada"></div>
<div class="t" style="left:2294px;top:13px;width:126px;text-align:center;font-size:17px;color:#444">J</div>
<div class="ab" style="left:2420px;top:9px;width:1px;height:21px;background:#dadada"></div>
<div class="t" style="left:2420px;top:13px;width:116px;text-align:center;font-size:17px;color:#444">K</div>
<div class="ab" style="left:2536px;top:9px;width:1px;height:21px;background:#dadada"></div>
<svg style="left:22px;top:12px" width="15" height="15"><path d="M15 0 L15 15 L0 15 Z" fill="#d6d6d6"/></svg>
<div class="ab" style="left:0;top:30px;width:39px;height:1022px;background:#f0f0f0;border-right:1px solid #c6c6c6"></div>
<div class="ab" style="left:0;top:30px;width:39px;height:42px;background:#e0e0e0;border-right:1px solid #c6c6c6"></div>
<div class="t" style="left:0;top:53.5px;width:39px;text-align:center;font-size:17px;color:#1e6b41">1</div>
<div class="ab" style="left:0;top:71px;width:38px;height:1px;background:#e2e2e2"></div>
<div class="t" style="left:0;top:86.5px;width:39px;text-align:center;font-size:17px;color:#444">2</div>
<div class="ab" style="left:0;top:104px;width:38px;height:1px;background:#e2e2e2"></div>
<div class="t" style="left:0;top:119.5px;width:39px;text-align:center;font-size:17px;color:#444">3</div>
<div class="ab" style="left:0;top:137px;width:38px;height:1px;background:#e2e2e2"></div>
<div class="t" style="left:0;top:152.5px;width:39px;text-align:center;font-size:17px;color:#444">4</div>
<div class="ab" style="left:0;top:170px;width:38px;height:1px;background:#e2e2e2"></div>
<div class="t" style="left:0;top:185.5px;width:39px;text-align:center;font-size:17px;color:#444">5</div>
<div class="ab" style="left:0;top:203px;width:38px;height:1px;background:#e2e2e2"></div>
<div class="t" style="left:0;top:218.5px;width:39px;text-align:center;font-size:17px;color:#444">6</div>
<div class="ab" style="left:0;top:236px;width:38px;height:1px;background:#e2e2e2"></div>
<div class="t" style="left:0;top:251.5px;width:39px;text-align:center;font-size:17px;color:#444">7</div>
<div class="ab" style="left:0;top:269px;width:38px;height:1px;background:#e2e2e2"></div>
<div class="t" style="left:0;top:284.5px;width:39px;text-align:center;font-size:17px;color:#444">8</div>
<div class="ab" style="left:0;top:302px;width:38px;height:1px;background:#e2e2e2"></div>
<div class="t" style="left:0;top:317.5px;width:39px;text-align:center;font-size:17px;color:#444">9</div>
<div class="ab" style="left:0;top:335px;width:38px;height:1px;background:#e2e2e2"></div>
<div class="t" style="left:0;top:350.5px;width:39px;text-align:center;font-size:17px;color:#444">10</div>
<div class="ab" style="left:0;top:368px;width:38px;height:1px;background:#e2e2e2"></div>
<div class="t" style="left:0;top:383.5px;width:39px;text-align:center;font-size:17px;color:#444">11</div>
<div class="ab" style="left:0;top:401px;width:38px;height:1px;background:#e2e2e2"></div>
<div class="t" style="left:0;top:416.5px;width:39px;text-align:center;font-size:17px;color:#444">12</div>
<div class="ab" style="left:0;top:434px;width:38px;height:1px;background:#e2e2e2"></div>
<div class="t" style="left:0;top:449.5px;width:39px;text-align:center;font-size:17px;color:#444">13</div>
<div class="ab" style="left:0;top:467px;width:38px;height:1px;background:#e2e2e2"></div>
<div class="t" style="left:0;top:482.5px;width:39px;text-align:center;font-size:17px;color:#444">14</div>
<div class="ab" style="left:0;top:500px;width:38px;height:1px;background:#e2e2e2"></div>
<div class="t" style="left:0;top:515.5px;width:39px;text-align:center;font-size:17px;color:#444">15</div>
<div class="ab" style="left:0;top:533px;width:38px;height:1px;background:#e2e2e2"></div>
<div class="t" style="left:0;top:548.5px;width:39px;text-align:center;font-size:17px;color:#444">16</div>
<div class="ab" style="left:0;top:566px;width:38px;height:1px;background:#e2e2e2"></div>
<div class="t" style="left:0;top:581.5px;width:39px;text-align:center;font-size:17px;color:#444">17</div>
<div class="ab" style="left:0;top:599px;width:38px;height:1px;background:#e2e2e2"></div>
<div class="t" style="left:0;top:614.5px;width:39px;text-align:center;font-size:17px;color:#444">18</div>
<div class="ab" style="left:0;top:632px;width:38px;height:1px;background:#e2e2e2"></div>
<div class="t" style="left:0;top:647.5px;width:39px;text-align:center;font-size:17px;color:#444">19</div>
<div class="ab" style="left:0;top:665px;width:38px;height:1px;background:#e2e2e2"></div>
<div class="t" style="left:0;top:680.5px;width:39px;text-align:center;font-size:17px;color:#444">20</div>
<div class="ab" style="left:0;top:698px;width:38px;height:1px;background:#e2e2e2"></div>
<div class="t" style="left:0;top:713.5px;width:39px;text-align:center;font-size:17px;color:#444">21</div>
<div class="ab" style="left:0;top:731px;width:38px;height:1px;background:#e2e2e2"></div>
<div class="t" style="left:0;top:746.5px;width:39px;text-align:center;font-size:17px;color:#444">22</div>
<div class="ab" style="left:0;top:764px;width:38px;height:1px;background:#e2e2e2"></div>
<div class="t" style="left:0;top:779.5px;width:39px;text-align:center;font-size:17px;color:#444">23</div>
<div class="ab" style="left:0;top:797px;width:38px;height:1px;background:#e2e2e2"></div>
<div class="t" style="left:0;top:812.5px;width:39px;text-align:center;font-size:17px;color:#444">24</div>
<div class="ab" style="left:0;top:830px;width:38px;height:1px;background:#e2e2e2"></div>
<div class="t" style="left:0;top:845.5px;width:39px;text-align:center;font-size:17px;color:#444">25</div>
<div class="ab" style="left:0;top:863px;width:38px;height:1px;background:#e2e2e2"></div>
<div class="t" style="left:0;top:878.5px;width:39px;text-align:center;font-size:17px;color:#444">26</div>
<div class="ab" style="left:0;top:896px;width:38px;height:1px;background:#e2e2e2"></div>
<div class="t" style="left:0;top:911.5px;width:39px;text-align:center;font-size:17px;color:#444">27</div>
<div class="ab" style="left:0;top:929px;width:38px;height:1px;background:#e2e2e2"></div>
<div class="t" style="left:0;top:944.5px;width:39px;text-align:center;font-size:17px;color:#444">28</div>
<div class="ab" style="left:0;top:962px;width:38px;height:1px;background:#e2e2e2"></div>
<div class="t" style="left:0;top:977.5px;width:39px;text-align:center;font-size:17px;color:#444">29</div>
<div class="ab" style="left:0;top:995px;width:38px;height:1px;background:#e2e2e2"></div>
<div class="t" style="left:0;top:1010.5px;width:39px;text-align:center;font-size:17px;color:#444">30</div>
<div class="ab" style="left:0;top:1028px;width:38px;height:1px;background:#e2e2e2"></div>
<div class="t" style="left:0;top:1043.5px;width:39px;text-align:center;font-size:17px;color:#444">31</div>
<div class="ab" style="left:0;top:1061px;width:38px;height:1px;background:#e2e2e2"></div>
<div class="t" style="left:0;top:1076.5px;width:39px;text-align:center;font-size:17px;color:#444">32</div>
<div class="ab" style="left:0;top:1094px;width:38px;height:1px;background:#e2e2e2"></div>
<div class="ab" style="left:39px;top:72px;width:156px;height:980px;background:#d9d9d9"></div>
<div class="ab" style="left:195px;top:72px;width:456px;height:980px;background:#c4bd97"></div>
<div class="ab" style="left:651px;top:72px;width:126px;height:980px;background:#d9d9d9"></div>
<div class="ab" style="left:777px;top:72px;width:156px;height:980px;background:#c4bd97"></div>
<div class="ab" style="left:933px;top:72px;width:126px;height:980px;background:#d9d9d9"></div>
<div class="ab" style="left:1059px;top:72px;width:577px;height:980px;background:#c4bd97"></div>
<div class="ab" style="left:1636px;top:72px;width:406px;height:980px;background:#d9d9d9"></div>
<div class="ab" style="left:2042px;top:72px;width:126px;height:980px;background:#c4bd97"></div>
<div class="ab" style="left:2168px;top:72px;width:126px;height:980px;background:#d9d9d9"></div>
<div class="ab" style="left:2294px;top:72px;width:126px;height:980px;background:#c4bd97"></div>
<div class="ab" style="left:2420px;top:72px;width:114px;height:980px;background:#d9d9d9"></div>
<div class="ab" style="left:39px;top:30px;width:2495px;height:42px;background:#00b0f0"></div>
<div class="ab" style="left:39px;top:71px;width:2495px;height:1px;background:#000"></div>
<div class="ab" style="left:39px;top:104px;width:2495px;height:1px;background:#000"></div>
<div class="ab" style="left:39px;top:137px;width:2495px;height:1px;background:#000"></div>
<div class="ab" style="left:39px;top:170px;width:2495px;height:1px;background:#000"></div>
<div class="ab" style="left:39px;top:203px;width:2495px;height:1px;background:#000"></div>
<div class="ab" style="left:39px;top:236px;width:2495px;height:1px;background:#000"></div>
<div class="ab" style="left:39px;top:269px;width:2495px;height:1px;background:#000"></div>
<div class="ab" style="left:39px;top:302px;width:2495px;height:1px;background:#000"></div>
<div class="ab" style="left:39px;top:335px;width:2495px;height:1px;background:#000"></div>
<div class="ab" style="left:39px;top:368px;width:2495px;height:1px;background:#000"></div>
<div class="ab" style="left:39px;top:401px;width:2495px;height:1px;background:#000"></div>
<div class="ab" style="left:39px;top:434px;width:2495px;height:1px;background:#000"></div>
<div class="ab" style="left:39px;top:467px;width:2495px;height:1px;background:#000"></div>
<div class="ab" style="left:39px;top:500px;width:2495px;height:1px;background:#000"></div>
<div class="ab" style="left:39px;top:533px;width:2495px;height:1px;background:#000"></div>
<div class="ab" style="left:39px;top:566px;width:2495px;height:1px;background:#000"></div>
<div class="ab" style="left:39px;top:599px;width:2495px;height:1px;background:#000"></div>
<div class="ab" style="left:39px;top:632px;width:2495px;height:1px;background:#000"></div>
<div class="ab" style="left:39px;top:665px;width:2495px;height:1px;background:#000"></div>
<div class="ab" style="left:39px;top:698px;width:2495px;height:1px;background:#000"></div>
<div class="ab" style="left:39px;top:731px;width:2495px;height:1px;background:#000"></div>
<div class="ab" style="left:39px;top:764px;width:2495px;height:1px;background:#000"></div>
<div class="ab" style="left:39px;top:797px;width:2495px;height:1px;background:#000"></div>
<div class="ab" style="left:39px;top:830px;width:2495px;height:1px;background:#000"></div>
<div class="ab" style="left:39px;top:863px;width:2495px;height:1px;background:#000"></div>
<div class="ab" style="left:39px;top:896px;width:2495px;height:1px;background:#000"></div>
<div class="ab" style="left:39px;top:929px;width:2495px;height:1px;background:#000"></div>
<div class="ab" style="left:39px;top:962px;width:2495px;height:1px;background:#000"></div>
<div class="ab" style="left:39px;top:995px;width:2495px;height:1px;background:#000"></div>
<div class="ab" style="left:39px;top:1028px;width:2495px;height:1px;background:#000"></div>
<div class="ab" style="left:39px;top:1061px;width:2495px;height:1px;background:#000"></div>
<div class="ab" style="left:195px;top:30px;width:1px;height:1022px;background:#000"></div>
<div class="ab" style="left:651px;top:30px;width:1px;height:1022px;background:#000"></div>
<div class="ab" style="left:777px;top:30px;width:1px;height:1022px;background:#000"></div>
<div class="ab" style="left:933px;top:30px;width:1px;height:1022px;background:#000"></div>
<div class="ab" style="left:1059px;top:30px;width:1px;height:1022px;background:#000"></div>
<div class="ab" style="left:1636px;top:30px;width:1px;height:1022px;background:#000"></div>
<div class="ab" style="left:2042px;top:30px;width:1px;height:1022px;background:#000"></div>
<div class="ab" style="left:2168px;top:30px;width:1px;height:1022px;background:#000"></div>
<div class="ab" style="left:2294px;top:30px;width:1px;height:1022px;background:#000"></div>
<div class="ab" style="left:2420px;top:30px;width:1px;height:1022px;background:#000"></div>
<div class="t" style="left:39px;top:42px;width:156px;text-align:center;font-size:16.5px;font-weight:bold;line-height:21px;color:#000;transform:scaleX(1.09);-webkit-text-stroke:0">เลขทะเบียน</div>
<div class="t" style="left:195px;top:42px;width:456px;text-align:center;font-size:16.5px;font-weight:bold;line-height:21px;color:#000;transform:scaleX(1.09);-webkit-text-stroke:0">ชื่อนิติบุคคล</div>
<div class="t" style="left:651px;top:33px;width:126px;text-align:center;font-size:16.5px;font-weight:bold;line-height:21px;color:#000;transform:scaleX(1.09);-webkit-text-stroke:0">วันที่<br>จดทะเบียน</div>
<div class="t" style="left:777px;top:33px;width:156px;text-align:center;font-size:16.5px;font-weight:bold;line-height:21px;color:#000;transform:scaleX(1.09);-webkit-text-stroke:0">ทุนจดทะเบียน<br>(บาท)</div>
<div class="t" style="left:933px;top:33px;width:126px;text-align:center;font-size:16.5px;font-weight:bold;line-height:21px;color:#000;transform:scaleX(1.09);-webkit-text-stroke:0">รหัส<br>วัตถุประสงค์</div>
<div class="t" style="left:1059px;top:42px;width:577px;text-align:center;font-size:16.5px;font-weight:bold;line-height:21px;color:#000;transform:scaleX(1.09);-webkit-text-stroke:0">รายละเอียดวัตถุประสงค์</div>
<div class="t" style="left:1636px;top:42px;width:406px;text-align:center;font-size:16.5px;font-weight:bold;line-height:21px;color:#000;transform:scaleX(1.09);-webkit-text-stroke:0">ที่ตั้งสำนักงานใหญ่</div>
<div class="t" style="left:2042px;top:42px;width:126px;text-align:center;font-size:16.5px;font-weight:bold;line-height:21px;color:#000;transform:scaleX(1.09);-webkit-text-stroke:0">ตำบล</div>
<div class="t" style="left:2168px;top:42px;width:126px;text-align:center;font-size:16.5px;font-weight:bold;line-height:21px;color:#000;transform:scaleX(1.09);-webkit-text-stroke:0">อำเภอ</div>
<div class="t" style="left:2294px;top:42px;width:126px;text-align:center;font-size:16.5px;font-weight:bold;line-height:21px;color:#000;transform:scaleX(1.09);-webkit-text-stroke:0">จังหวัด</div>
<div class="t" style="left:2420px;top:33px;width:116px;text-align:center;font-size:16.5px;font-weight:bold;line-height:21px;color:#000;transform:scaleX(1.09);-webkit-text-stroke:0">รหัส<br>ไปรษณีย์</div>
<div class="c" style="left:40px;top:73px;width:154px;height:31px"><span style="left:0;right:0;text-align:center">0105569017801</span></div>
<div class="c" style="left:196px;top:73px;width:454px;height:31px"><span style="left:4px;transform:scaleX(0.965);transform-origin:0 0">บจ.สยามไบโอไซเอนซ์ จำกัด</span></div>
<div class="c" style="left:652px;top:73px;width:124px;height:31px"><span style="left:0;right:0;text-align:center">26/1/2569</span></div>
<div class="c" style="left:778px;top:73px;width:154px;height:31px"><span style="right:2px">5,050,000,000</span></div>
<div class="c" style="left:934px;top:73px;width:124px;height:31px"><span style="left:0;right:0;text-align:center">72102</span></div>
<div class="c" style="left:1060px;top:73px;width:575px;height:31px"><span style="left:4px;transform:scaleX(0.965);transform-origin:0 0">ประกอบกิจการ การวิจัยและพัฒนาเชิงทดลองด้านเทคโนโลยีชีวภาพ</span></div>
<div class="c" style="left:1637px;top:73px;width:404px;height:31px"><span style="left:4px;transform:scaleX(0.965);transform-origin:0 0">44  อาคารศรีจุลทรัพย์ ชั้นที่ 18 ยูนิต เอ ถนนพระราม 1</span></div>
<div class="c" style="left:2043px;top:73px;width:124px;height:31px"><span style="left:4px;transform:scaleX(0.965);transform-origin:0 0">แขวงรองเมือง</span></div>
<div class="c" style="left:2169px;top:73px;width:124px;height:31px"><span style="left:4px;transform:scaleX(0.965);transform-origin:0 0">เขตปทุมวัน</span></div>
<div class="c" style="left:2295px;top:73px;width:124px;height:31px"><span style="left:4px;transform:scaleX(0.965);transform-origin:0 0">กรุงเทพมหานคร</span></div>
<div class="c" style="left:2421px;top:73px;width:114px;height:31px"><span style="left:0;right:0;text-align:center">10330</span></div>
<div class="c" style="left:40px;top:106px;width:154px;height:31px"><span style="left:0;right:0;text-align:center">0105569009239</span></div>
<div class="c" style="left:196px;top:106px;width:454px;height:31px"><span style="left:4px;transform:scaleX(0.965);transform-origin:0 0">บจ.ทวีลาภ 698 จำกัด</span></div>
<div class="c" style="left:652px;top:106px;width:124px;height:31px"><span style="left:0;right:0;text-align:center">14/1/2569</span></div>
<div class="c" style="left:778px;top:106px;width:154px;height:31px"><span style="right:2px">4,000,000,000</span></div>
<div class="c" style="left:934px;top:106px;width:124px;height:31px"><span style="left:0;right:0;text-align:center">35101</span></div>
<div class="c" style="left:1060px;top:106px;width:575px;height:31px"><span style="left:4px;transform:scaleX(0.965);transform-origin:0 0">ประกอบกิจการเกี่ยวกับพลังงานไฟฟ้า อันได้แก่ ซื้อ ขาย จัดส่ง จัดหา สำรวจ พัฒนา และผลิต</span></div>
<div class="c" style="left:1637px;top:106px;width:404px;height:31px"><span style="left:4px;transform:scaleX(0.965);transform-origin:0 0">143  ซอย เฉลิมพระเกียรติ ร.9 ซอย22</span></div>
<div class="c" style="left:2043px;top:106px;width:124px;height:31px"><span style="left:4px;transform:scaleX(0.965);transform-origin:0 0">แขวงหนองบอน</span></div>
<div class="c" style="left:2169px;top:106px;width:124px;height:31px"><span style="left:4px;transform:scaleX(0.965);transform-origin:0 0">เขตประเวศ</span></div>
<div class="c" style="left:2295px;top:106px;width:124px;height:31px"><span style="left:4px;transform:scaleX(0.965);transform-origin:0 0">กรุงเทพมหานคร</span></div>
<div class="c" style="left:2421px;top:106px;width:114px;height:31px"><span style="left:0;right:0;text-align:center">10250</span></div>
<div class="c" style="left:40px;top:139px;width:154px;height:31px"><span style="left:0;right:0;text-align:center">0105569010873</span></div>
<div class="c" style="left:196px;top:139px;width:454px;height:31px"><span style="left:4px;transform:scaleX(0.965);transform-origin:0 0">บจ.จีทีซี กรุ๊ป โฮลดิ้ง จำกัด</span></div>
<div class="c" style="left:652px;top:139px;width:124px;height:31px"><span style="left:0;right:0;text-align:center">16/1/2569</span></div>
<div class="c" style="left:778px;top:139px;width:154px;height:31px"><span style="right:2px">140,000,000</span></div>
<div class="c" style="left:934px;top:139px;width:124px;height:31px"><span style="left:0;right:0;text-align:center">64202</span></div>
<div class="c" style="left:1060px;top:139px;width:575px;height:31px"><span style="left:4px;transform:scaleX(0.965);transform-origin:0 0">ประกอบธุรกิจทำการเข้าไปถือหุ้นในกิจการอื่นเพื่อวัตถุประสงค์ในการบริหาร การขยายธุรกิจ</span></div>
<div class="c" style="left:1637px;top:139px;width:404px;height:31px"><span style="left:4px;transform:scaleX(0.965);transform-origin:0 0">208  อาคาร208 แบงค็อก  ห้องเลขที่ 1501 ชั้นที่ 15 ถนนวิทยุ</span></div>
<div class="c" style="left:2043px;top:139px;width:124px;height:31px"><span style="left:4px;transform:scaleX(0.965);transform-origin:0 0">แขวงลุมพินี</span></div>
<div class="c" style="left:2169px;top:139px;width:124px;height:31px"><span style="left:4px;transform:scaleX(0.965);transform-origin:0 0">เขตปทุมวัน</span></div>
<div class="c" style="left:2295px;top:139px;width:124px;height:31px"><span style="left:4px;transform:scaleX(0.965);transform-origin:0 0">กรุงเทพมหานคร</span></div>
<div class="c" style="left:2421px;top:139px;width:114px;height:31px"><span style="left:0;right:0;text-align:center">10330</span></div>
<div class="c" style="left:40px;top:172px;width:154px;height:31px"><span style="left:0;right:0;text-align:center">0105569018319</span></div>
<div class="c" style="left:196px;top:172px;width:454px;height:31px"><span style="left:4px;transform:scaleX(0.965);transform-origin:0 0">บจ.ชูโรเจอร์ โฮลดิ้ง จำกัด</span></div>
<div class="c" style="left:652px;top:172px;width:124px;height:31px"><span style="left:0;right:0;text-align:center">26/1/2569</span></div>
<div class="c" style="left:778px;top:172px;width:154px;height:31px"><span style="right:2px">100,000,000</span></div>
<div class="c" style="left:934px;top:172px;width:124px;height:31px"><span style="left:0;right:0;text-align:center">64202</span></div>
<div class="c" style="left:1060px;top:172px;width:575px;height:31px"><span style="left:4px;transform:scaleX(0.965);transform-origin:0 0">ประกอบกิจการเข้าเป็นหุ้นส่วนจำกัดความรับผิดในห้างหุ้นส่วนจำกัด เป็นผู้ถือหุ้นในบริษัท</span></div>
<div class="c" style="left:1637px;top:172px;width:404px;height:31px"><span style="left:4px;transform:scaleX(0.965);transform-origin:0 0">55  ซอย บรมราชชนนี 75</span></div>
<div class="c" style="left:2043px;top:172px;width:124px;height:31px"><span style="left:4px;transform:scaleX(0.965);transform-origin:0 0">แขวงบางระมาด</span></div>
<div class="c" style="left:2169px;top:172px;width:124px;height:31px"><span style="left:4px;transform:scaleX(0.965);transform-origin:0 0">เขตตลิ่งชัน</span></div>
<div class="c" style="left:2295px;top:172px;width:124px;height:31px"><span style="left:4px;transform:scaleX(0.965);transform-origin:0 0">กรุงเทพมหานคร</span></div>
<div class="c" style="left:2421px;top:172px;width:114px;height:31px"><span style="left:0;right:0;text-align:center">10170</span></div>
<div class="c" style="left:40px;top:205px;width:154px;height:31px"><span style="left:0;right:0;text-align:center">0105569016375</span></div>
<div class="c" style="left:196px;top:205px;width:454px;height:31px"><span style="left:4px;transform:scaleX(0.965);transform-origin:0 0">บจ.เอ็นทีเอฟ โฮลดิ้ง จำกัด</span></div>
<div class="c" style="left:652px;top:205px;width:124px;height:31px"><span style="left:0;right:0;text-align:center">23/1/2569</span></div>
<div class="c" style="left:778px;top:205px;width:154px;height:31px"><span style="right:2px">70,000,000</span></div>
<div class="c" style="left:934px;top:205px;width:124px;height:31px"><span style="left:0;right:0;text-align:center">64202</span></div>
<div class="c" style="left:1060px;top:205px;width:575px;height:31px"><span style="left:4px;transform:scaleX(0.965);transform-origin:0 0">ประกอบกิจการเข้าไปถือหุ้น ลงทุน หรือ ร่วมลงทุน ในห้างหุ้นส่วนจำกัด บริษัทจำกัดและ</span></div>
<div class="c" style="left:1637px;top:205px;width:404px;height:31px"><span style="left:4px;transform:scaleX(0.965);transform-origin:0 0">195  อาคารวัน แบงค็อก ทาวเวอร์ 4  ห้องเลขที่ 1211-1213</span></div>
<div class="c" style="left:2043px;top:205px;width:124px;height:31px"><span style="left:4px;transform:scaleX(0.965);transform-origin:0 0">แขวงลุมพินี</span></div>
<div class="c" style="left:2169px;top:205px;width:124px;height:31px"><span style="left:4px;transform:scaleX(0.965);transform-origin:0 0">เขตปทุมวัน</span></div>
<div class="c" style="left:2295px;top:205px;width:124px;height:31px"><span style="left:4px;transform:scaleX(0.965);transform-origin:0 0">กรุงเทพมหานคร</span></div>
<div class="c" style="left:2421px;top:205px;width:114px;height:31px"><span style="left:0;right:0;text-align:center">10330</span></div>
<div class="c" style="left:40px;top:238px;width:154px;height:31px"><span style="left:0;right:0;text-align:center">0105569008623</span></div>
<div class="c" style="left:196px;top:238px;width:454px;height:31px"><span style="left:4px;transform:scaleX(0.965);transform-origin:0 0">บจ.สิรินภัค 3 จำกัด</span></div>
<div class="c" style="left:652px;top:238px;width:124px;height:31px"><span style="left:0;right:0;text-align:center">14/1/2569</span></div>
<div class="c" style="left:778px;top:238px;width:154px;height:31px"><span style="right:2px">50,000,000</span></div>
<div class="c" style="left:934px;top:238px;width:124px;height:31px"><span style="left:0;right:0;text-align:center">68102</span></div>
<div class="c" style="left:1060px;top:238px;width:575px;height:31px"><span style="left:4px;transform:scaleX(0.965);transform-origin:0 0">ประกอบกิจการพัฒนาอสังหาริมทรัพย์</span></div>
<div class="c" style="left:1637px;top:238px;width:404px;height:31px"><span style="left:4px;transform:scaleX(0.965);transform-origin:0 0">59  ซอยริมคลองพระโขนง</span></div>
<div class="c" style="left:2043px;top:238px;width:124px;height:31px"><span style="left:4px;transform:scaleX(0.965);transform-origin:0 0">แขวงพระโขนงเหนือ</span></div>
<div class="c" style="left:2169px;top:238px;width:124px;height:31px"><span style="left:4px;transform:scaleX(0.965);transform-origin:0 0">เขตวัฒนา</span></div>
<div class="c" style="left:2295px;top:238px;width:124px;height:31px"><span style="left:4px;transform:scaleX(0.965);transform-origin:0 0">กรุงเทพมหานคร</span></div>
<div class="c" style="left:2421px;top:238px;width:114px;height:31px"><span style="left:0;right:0;text-align:center">10110</span></div>
<div class="c" style="left:40px;top:271px;width:154px;height:31px"><span style="left:0;right:0;text-align:center">0105569008631</span></div>
<div class="c" style="left:196px;top:271px;width:454px;height:31px"><span style="left:4px;transform:scaleX(0.965);transform-origin:0 0">บจ.สิรินภัค 2 จำกัด</span></div>
<div class="c" style="left:652px;top:271px;width:124px;height:31px"><span style="left:0;right:0;text-align:center">14/1/2569</span></div>
<div class="c" style="left:778px;top:271px;width:154px;height:31px"><span style="right:2px">50,000,000</span></div>
<div class="c" style="left:934px;top:271px;width:124px;height:31px"><span style="left:0;right:0;text-align:center">68102</span></div>
<div class="c" style="left:1060px;top:271px;width:575px;height:31px"><span style="left:4px;transform:scaleX(0.965);transform-origin:0 0">ประกอบกิจการพัฒนาอสังหาริมทรัพย์</span></div>
<div class="c" style="left:1637px;top:271px;width:404px;height:31px"><span style="left:4px;transform:scaleX(0.965);transform-origin:0 0">59  ซอยริมคลองพระโขนง</span></div>
<div class="c" style="left:2043px;top:271px;width:124px;height:31px"><span style="left:4px;transform:scaleX(0.965);transform-origin:0 0">แขวงพระโขนงเหนือ</span></div>
<div class="c" style="left:2169px;top:271px;width:124px;height:31px"><span style="left:4px;transform:scaleX(0.965);transform-origin:0 0">เขตวัฒนา</span></div>
<div class="c" style="left:2295px;top:271px;width:124px;height:31px"><span style="left:4px;transform:scaleX(0.965);transform-origin:0 0">กรุงเทพมหานคร</span></div>
<div class="c" style="left:2421px;top:271px;width:114px;height:31px"><span style="left:0;right:0;text-align:center">10110</span></div>
<div class="c" style="left:40px;top:304px;width:154px;height:31px"><span style="left:0;right:0;text-align:center">0105569008640</span></div>
<div class="c" style="left:196px;top:304px;width:454px;height:31px"><span style="left:4px;transform:scaleX(0.965);transform-origin:0 0">บจ.สิรินภัค 1 จำกัด</span></div>
<div class="c" style="left:652px;top:304px;width:124px;height:31px"><span style="left:0;right:0;text-align:center">14/1/2569</span></div>
<div class="c" style="left:778px;top:304px;width:154px;height:31px"><span style="right:2px">50,000,000</span></div>
<div class="c" style="left:934px;top:304px;width:124px;height:31px"><span style="left:0;right:0;text-align:center">68102</span></div>
<div class="c" style="left:1060px;top:304px;width:575px;height:31px"><span style="left:4px;transform:scaleX(0.965);transform-origin:0 0">ประกอบกิจการพัฒนาอสังหาริมทรัพย์</span></div>
<div class="c" style="left:1637px;top:304px;width:404px;height:31px"><span style="left:4px;transform:scaleX(0.965);transform-origin:0 0">59  ซอยริมคลองพระโขนง</span></div>
<div class="c" style="left:2043px;top:304px;width:124px;height:31px"><span style="left:4px;transform:scaleX(0.965);transform-origin:0 0">แขวงพระโขนงเหนือ</span></div>
<div class="c" style="left:2169px;top:304px;width:124px;height:31px"><span style="left:4px;transform:scaleX(0.965);transform-origin:0 0">เขตวัฒนา</span></div>
<div class="c" style="left:2295px;top:304px;width:124px;height:31px"><span style="left:4px;transform:scaleX(0.965);transform-origin:0 0">กรุงเทพมหานคร</span></div>
<div class="c" style="left:2421px;top:304px;width:114px;height:31px"><span style="left:0;right:0;text-align:center">10110</span></div>
<div class="c" style="left:40px;top:337px;width:154px;height:31px"><span style="left:0;right:0;text-align:center">0105569016758</span></div>
<div class="c" style="left:196px;top:337px;width:454px;height:31px"><span style="left:4px;transform:scaleX(0.965);transform-origin:0 0">บจ.สมาร์ทฟินน์ แคปปิตอล จำกัด</span></div>
<div class="c" style="left:652px;top:337px;width:124px;height:31px"><span style="left:0;right:0;text-align:center">23/1/2569</span></div>
<div class="c" style="left:778px;top:337px;width:154px;height:31px"><span style="right:2px">50,000,000</span></div>
<div class="c" style="left:934px;top:337px;width:124px;height:31px"><span style="left:0;right:0;text-align:center">68101</span></div>
<div class="c" style="left:1060px;top:337px;width:575px;height:31px"><span style="left:4px;transform:scaleX(0.965);transform-origin:0 0">ประกอบกิจการซื้อ ขาย เช่า ให้เช่า เช่าซื้อ ขายฝาก ซื้อ จำนอง ที่ดิน อาคารพาณิชย์ บ้าน</span></div>
<div class="c" style="left:1637px;top:337px;width:404px;height:31px"><span style="left:4px;transform:scaleX(0.965);transform-origin:0 0">555  อาคารรสา วัน (อาคารบี) ชั้น 25  ห้องเลขที่ 2504 ถนนพหลโยธิน</span></div>
<div class="c" style="left:2043px;top:337px;width:124px;height:31px"><span style="left:4px;transform:scaleX(0.965);transform-origin:0 0">แขวงจตุจักร</span></div>
<div class="c" style="left:2169px;top:337px;width:124px;height:31px"><span style="left:4px;transform:scaleX(0.965);transform-origin:0 0">เขตจตุจักร</span></div>
<div class="c" style="left:2295px;top:337px;width:124px;height:31px"><span style="left:4px;transform:scaleX(0.965);transform-origin:0 0">กรุงเทพมหานคร</span></div>
<div class="c" style="left:2421px;top:337px;width:114px;height:31px"><span style="left:0;right:0;text-align:center">10900</span></div>
<div class="c" style="left:40px;top:370px;width:154px;height:31px"><span style="left:0;right:0;text-align:center">0105569018955</span></div>
<div class="c" style="left:196px;top:370px;width:454px;height:31px"><span style="left:4px;transform:scaleX(0.965);transform-origin:0 0">บจ.สิรินภัค 4 จำกัด</span></div>
<div class="c" style="left:652px;top:370px;width:124px;height:31px"><span style="left:0;right:0;text-align:center">27/1/2569</span></div>
<div class="c" style="left:778px;top:370px;width:154px;height:31px"><span style="right:2px">50,000,000</span></div>
<div class="c" style="left:934px;top:370px;width:124px;height:31px"><span style="left:0;right:0;text-align:center">68101</span></div>
<div class="c" style="left:1060px;top:370px;width:575px;height:31px"><span style="left:4px;transform:scaleX(0.965);transform-origin:0 0">ประกอบกิจการค้าที่ดิน จัดสรรที่ดิน หรือสิ่งปลูกสร้าง หรือที่ดินพร้อมสิ่งปลูกสร้างเพื่อจำหน่าย</span></div>
<div class="c" style="left:1637px;top:370px;width:404px;height:31px"><span style="left:4px;transform:scaleX(0.965);transform-origin:0 0">59  ซอย ริมคลองพระโขนง</span></div>
<div class="c" style="left:2043px;top:370px;width:124px;height:31px"><span style="left:4px;transform:scaleX(0.965);transform-origin:0 0">แขวงพระโขนงเหนือ</span></div>
<div class="c" style="left:2169px;top:370px;width:124px;height:31px"><span style="left:4px;transform:scaleX(0.965);transform-origin:0 0">เขตวัฒนา</span></div>
<div class="c" style="left:2295px;top:370px;width:124px;height:31px"><span style="left:4px;transform:scaleX(0.965);transform-origin:0 0">กรุงเทพมหานคร</span></div>
<div class="c" style="left:2421px;top:370px;width:114px;height:31px"><span style="left:0;right:0;text-align:center">10110</span></div>
<div class="c" style="left:40px;top:403px;width:154px;height:31px"><span style="left:0;right:0;text-align:center">0105569012531</span></div>
<div class="c" style="left:196px;top:403px;width:454px;height:31px"><span style="left:4px;transform:scaleX(0.965);transform-origin:0 0">บจ.รอยัลไพรม์ดีเวลลอปเม้นท์ จำกัด</span></div>
<div class="c" style="left:652px;top:403px;width:124px;height:31px"><span style="left:0;right:0;text-align:center">19/1/2569</span></div>
<div class="c" style="left:778px;top:403px;width:154px;height:31px"><span style="right:2px">40,000,000</span></div>
<div class="c" style="left:934px;top:403px;width:124px;height:31px"><span style="left:0;right:0;text-align:center">68102</span></div>
<div class="c" style="left:1060px;top:403px;width:575px;height:31px"><span style="left:4px;transform:scaleX(0.965);transform-origin:0 0">ประกอบกิจการ ซื้อ ขาย เช่า ให้เช่า ขายฝาก สังหาริมทรัพย์และอสังหาริมทรัพย์ รวมทั้ง</span></div>
<div class="c" style="left:1637px;top:403px;width:404px;height:31px"><span style="left:4px;transform:scaleX(0.965);transform-origin:0 0">933  อาคารรวมทุนไทย ชั้นที่ 11 ถนนมหาไชย</span></div>
<div class="c" style="left:2043px;top:403px;width:124px;height:31px"><span style="left:4px;transform:scaleX(0.965);transform-origin:0 0">แขวงวังบูรพาภิรมย์</span></div>
<div class="c" style="left:2169px;top:403px;width:124px;height:31px"><span style="left:4px;transform:scaleX(0.965);transform-origin:0 0">เขตพระนคร</span></div>
<div class="c" style="left:2295px;top:403px;width:124px;height:31px"><span style="left:4px;transform:scaleX(0.965);transform-origin:0 0">กรุงเทพมหานคร</span></div>
<div class="c" style="left:2421px;top:403px;width:114px;height:31px"><span style="left:0;right:0;text-align:center">10200</span></div>
<div class="c" style="left:40px;top:436px;width:154px;height:31px"><span style="left:0;right:0;text-align:center">0105569015433</span></div>
<div class="c" style="left:196px;top:436px;width:454px;height:31px"><span style="left:4px;transform:scaleX(0.965);transform-origin:0 0">บจ.เอด้า เอนเนอร์จี 3 จำกัด</span></div>
<div class="c" style="left:652px;top:436px;width:124px;height:31px"><span style="left:0;right:0;text-align:center">22/1/2569</span></div>
<div class="c" style="left:778px;top:436px;width:154px;height:31px"><span style="right:2px">30,000,000</span></div>
<div class="c" style="left:934px;top:436px;width:124px;height:31px"><span style="left:0;right:0;text-align:center">35101</span></div>
<div class="c" style="left:1060px;top:436px;width:575px;height:31px"><span style="left:4px;transform:scaleX(0.965);transform-origin:0 0">ประกอบกิจการผลิตและจำหน่ายกระแสไฟฟ้าจากพลังงานแสงอาทิตย์ และพลังงานหมุนเวียน</span></div>
<div class="c" style="left:1637px;top:436px;width:404px;height:31px"><span style="left:4px;transform:scaleX(0.965);transform-origin:0 0">88  ซอย โยธินพัฒนา</span></div>
<div class="c" style="left:2043px;top:436px;width:124px;height:31px"><span style="left:4px;transform:scaleX(0.965);transform-origin:0 0">แขวงคลองจั่น</span></div>
<div class="c" style="left:2169px;top:436px;width:124px;height:31px"><span style="left:4px;transform:scaleX(0.965);transform-origin:0 0">เขตบางกะปิ</span></div>
<div class="c" style="left:2295px;top:436px;width:124px;height:31px"><span style="left:4px;transform:scaleX(0.965);transform-origin:0 0">กรุงเทพมหานคร</span></div>
<div class="c" style="left:2421px;top:436px;width:114px;height:31px"><span style="left:0;right:0;text-align:center">10240</span></div>
<div class="c" style="left:40px;top:469px;width:154px;height:31px"><span style="left:0;right:0;text-align:center">0105569015531</span></div>
<div class="c" style="left:196px;top:469px;width:454px;height:31px"><span style="left:4px;transform:scaleX(0.965);transform-origin:0 0">บจ.เอด้า เอนเนอร์จี 2 จำกัด</span></div>
<div class="c" style="left:652px;top:469px;width:124px;height:31px"><span style="left:0;right:0;text-align:center">22/1/2569</span></div>
<div class="c" style="left:778px;top:469px;width:154px;height:31px"><span style="right:2px">30,000,000</span></div>
<div class="c" style="left:934px;top:469px;width:124px;height:31px"><span style="left:0;right:0;text-align:center">35101</span></div>
<div class="c" style="left:1060px;top:469px;width:575px;height:31px"><span style="left:4px;transform:scaleX(0.965);transform-origin:0 0">ประกอบกิจการผลิตและจำหน่ายกระแสไฟฟ้าจากพลังงานแสงอาทิตย์ และพลังงานหมุนเวียน</span></div>
<div class="c" style="left:1637px;top:469px;width:404px;height:31px"><span style="left:4px;transform:scaleX(0.965);transform-origin:0 0">88  ซอย โยธินพัฒนา</span></div>
<div class="c" style="left:2043px;top:469px;width:124px;height:31px"><span style="left:4px;transform:scaleX(0.965);transform-origin:0 0">แขวงคลองจั่น</span></div>
<div class="c" style="left:2169px;top:469px;width:124px;height:31px"><span style="left:4px;transform:scaleX(0.965);transform-origin:0 0">เขตบางกะปิ</span></div>
<div class="c" style="left:2295px;top:469px;width:124px;height:31px"><span style="left:4px;transform:scaleX(0.965);transform-origin:0 0">กรุงเทพมหานคร</span></div>
<div class="c" style="left:2421px;top:469px;width:114px;height:31px"><span style="left:0;right:0;text-align:center">10240</span></div>
<div class="c" style="left:40px;top:502px;width:154px;height:31px"><span style="left:0;right:0;text-align:center">0105569016278</span></div>
<div class="c" style="left:196px;top:502px;width:454px;height:31px"><span style="left:4px;transform:scaleX(0.965);transform-origin:0 0">บจ.มิราอิ แคสติ้ง เอเชีย แปซิฟิก จำกัด</span></div>
<div class="c" style="left:652px;top:502px;width:124px;height:31px"><span style="left:0;right:0;text-align:center">23/1/2569</span></div>
<div class="c" style="left:778px;top:502px;width:154px;height:31px"><span style="right:2px">30,000,000</span></div>
<div class="c" style="left:934px;top:502px;width:124px;height:31px"><span style="left:0;right:0;text-align:center">46105</span></div>
<div class="c" style="left:1060px;top:502px;width:575px;height:31px"><span style="left:4px;transform:scaleX(0.965);transform-origin:0 0">ประกอบกิจการจำหน่ายชิ้นส่วนหล่อโลหะสำหรับยานยนต์ เครื่องจักรการเกษตร และอุปกรณ์</span></div>
<div class="c" style="left:1637px;top:502px;width:404px;height:31px"><span style="left:4px;transform:scaleX(0.965);transform-origin:0 0">399  อาคารอินเตอร์เชนจ 21  ห้องเลขที่ 3209-3210 ชั้นที่ 32</span></div>
<div class="c" style="left:2043px;top:502px;width:124px;height:31px"><span style="left:4px;transform:scaleX(0.965);transform-origin:0 0">แขวงคลองเตยเหนือ</span></div>
<div class="c" style="left:2169px;top:502px;width:124px;height:31px"><span style="left:4px;transform:scaleX(0.965);transform-origin:0 0">เขตวัฒนา</span></div>
<div class="c" style="left:2295px;top:502px;width:124px;height:31px"><span style="left:4px;transform:scaleX(0.965);transform-origin:0 0">กรุงเทพมหานคร</span></div>
<div class="c" style="left:2421px;top:502px;width:114px;height:31px"><span style="left:0;right:0;text-align:center">10110</span></div>
<div class="c" style="left:40px;top:535px;width:154px;height:31px"><span style="left:0;right:0;text-align:center">0105569003451</span></div>
<div class="c" style="left:196px;top:535px;width:454px;height:31px"><span style="left:4px;transform:scaleX(0.965);transform-origin:0 0">บจ.เดลต้า อินฟรา ทู จำกัด</span></div>
<div class="c" style="left:652px;top:535px;width:124px;height:31px"><span style="left:0;right:0;text-align:center">1/8/2569</span></div>
<div class="c" style="left:778px;top:535px;width:154px;height:31px"><span style="right:2px">24,000,000</span></div>
<div class="c" style="left:934px;top:535px;width:124px;height:31px"><span style="left:0;right:0;text-align:center">35101</span></div>
<div class="c" style="left:1060px;top:535px;width:575px;height:31px"><span style="left:4px;transform:scaleX(0.965);transform-origin:0 0">ประกอบกิจการผลิตและจำหน่ายไฟฟ้า น้ำ น้ำเย็น น้ำร้อน ไอน้ำ ความร้อน ความเย็น ในนิคม</span></div>
<div class="c" style="left:1637px;top:535px;width:404px;height:31px"><span style="left:4px;transform:scaleX(0.965);transform-origin:0 0">555/11  อาคารเอส เอส พี ทาวเวอร์ 1 ซอยสุขุมวิท 63 (เอกมัย)</span></div>
<div class="c" style="left:2043px;top:535px;width:124px;height:31px"><span style="left:4px;transform:scaleX(0.965);transform-origin:0 0">แขวงคลองตันเหนือ</span></div>
<div class="c" style="left:2169px;top:535px;width:124px;height:31px"><span style="left:4px;transform:scaleX(0.965);transform-origin:0 0">เขตวัฒนา</span></div>
<div class="c" style="left:2295px;top:535px;width:124px;height:31px"><span style="left:4px;transform:scaleX(0.965);transform-origin:0 0">กรุงเทพมหานคร</span></div>
<div class="c" style="left:2421px;top:535px;width:114px;height:31px"><span style="left:0;right:0;text-align:center">10110</span></div>
<div class="c" style="left:40px;top:568px;width:154px;height:31px"><span style="left:0;right:0;text-align:center">0105569006523</span></div>
<div class="c" style="left:196px;top:568px;width:454px;height:31px"><span style="left:4px;transform:scaleX(0.965);transform-origin:0 0">บจ.เดอะ ซีเรียม จำกัด</span></div>
<div class="c" style="left:652px;top:568px;width:124px;height:31px"><span style="left:0;right:0;text-align:center">1/10/2569</span></div>
<div class="c" style="left:778px;top:568px;width:154px;height:31px"><span style="right:2px">20,000,000</span></div>
<div class="c" style="left:934px;top:568px;width:124px;height:31px"><span style="left:0;right:0;text-align:center">68101</span></div>
<div class="c" style="left:1060px;top:568px;width:575px;height:31px"><span style="left:4px;transform:scaleX(0.965);transform-origin:0 0">ประกอบกิจการ ซื้อ ขาย เช่า ให้เช่า ให้บริการ สร้าง ก่อสร้าง ผลิต และเป็นนายหน้าธุรกิจ</span></div>
<div class="c" style="left:1637px;top:568px;width:404px;height:31px"><span style="left:4px;transform:scaleX(0.965);transform-origin:0 0">1553/30  ถนนลาดพร้าว</span></div>
<div class="c" style="left:2043px;top:568px;width:124px;height:31px"><span style="left:4px;transform:scaleX(0.965);transform-origin:0 0">แขวงสามเสนนอก</span></div>
<div class="c" style="left:2169px;top:568px;width:124px;height:31px"><span style="left:4px;transform:scaleX(0.965);transform-origin:0 0">เขตห้วยขวาง</span></div>
<div class="c" style="left:2295px;top:568px;width:124px;height:31px"><span style="left:4px;transform:scaleX(0.965);transform-origin:0 0">กรุงเทพมหานคร</span></div>
<div class="c" style="left:2421px;top:568px;width:114px;height:31px"><span style="left:0;right:0;text-align:center">10310</span></div>
<div class="c" style="left:40px;top:601px;width:154px;height:31px"><span style="left:0;right:0;text-align:center">0105569008666</span></div>
<div class="c" style="left:196px;top:601px;width:454px;height:31px"><span style="left:4px;transform:scaleX(0.965);transform-origin:0 0">บจ.ภูมิใจโซลาร์ จำกัด</span></div>
<div class="c" style="left:652px;top:601px;width:124px;height:31px"><span style="left:0;right:0;text-align:center">14/1/2569</span></div>
<div class="c" style="left:778px;top:601px;width:154px;height:31px"><span style="right:2px">20,000,000</span></div>
<div class="c" style="left:934px;top:601px;width:124px;height:31px"><span style="left:0;right:0;text-align:center">71102</span></div>
<div class="c" style="left:1060px;top:601px;width:575px;height:31px"><span style="left:4px;transform:scaleX(0.965);transform-origin:0 0">ประกอบกิจการดำเนินธุรกิจพัฒนาโครงการโรงไฟฟ้าพลังงานหมุนเวียน สนับสนุนกลยุทธ์</span></div>
<div class="c" style="left:1637px;top:601px;width:404px;height:31px"><span style="left:4px;transform:scaleX(0.965);transform-origin:0 0">654/18-19  อาคารโครงการสามย่าน บิสซิเนสทาวน์ ถนนพระราม 4</span></div>
<div class="c" style="left:2043px;top:601px;width:124px;height:31px"><span style="left:4px;transform:scaleX(0.965);transform-origin:0 0">แขวงมหาพฤฒาราม</span></div>
<div class="c" style="left:2169px;top:601px;width:124px;height:31px"><span style="left:4px;transform:scaleX(0.965);transform-origin:0 0">เขตบางรัก</span></div>
<div class="c" style="left:2295px;top:601px;width:124px;height:31px"><span style="left:4px;transform:scaleX(0.965);transform-origin:0 0">กรุงเทพมหานคร</span></div>
<div class="c" style="left:2421px;top:601px;width:114px;height:31px"><span style="left:0;right:0;text-align:center">10500</span></div>
<div class="c" style="left:40px;top:634px;width:154px;height:31px"><span style="left:0;right:0;text-align:center">0105569012027</span></div>
<div class="c" style="left:196px;top:634px;width:454px;height:31px"><span style="left:4px;transform:scaleX(0.965);transform-origin:0 0">บจ.เอ็มแอนด์บี เมอริเดียน โพรคิวเมนท์ จำกัด</span></div>
<div class="c" style="left:652px;top:634px;width:124px;height:31px"><span style="left:0;right:0;text-align:center">16/1/2569</span></div>
<div class="c" style="left:778px;top:634px;width:154px;height:31px"><span style="right:2px">20,000,000</span></div>
<div class="c" style="left:934px;top:634px;width:124px;height:31px"><span style="left:0;right:0;text-align:center">46103</span></div>
<div class="c" style="left:1060px;top:634px;width:575px;height:31px"><span style="left:4px;transform:scaleX(0.965);transform-origin:0 0">ประกอบกิจการซื้อ ขาย เสื้อผ้า รองเท้า ยุทโธปกรณ์ เสื้อเกราะ หมวกทหาร กับหน่วยงาน</span></div>
<div class="c" style="left:1637px;top:634px;width:404px;height:31px"><span style="left:4px;transform:scaleX(0.965);transform-origin:0 0">11  ซอย พัฒนาการ 63</span></div>
<div class="c" style="left:2043px;top:634px;width:124px;height:31px"><span style="left:4px;transform:scaleX(0.965);transform-origin:0 0">แขวงประเวศ</span></div>
<div class="c" style="left:2169px;top:634px;width:124px;height:31px"><span style="left:4px;transform:scaleX(0.965);transform-origin:0 0">เขตประเวศ</span></div>
<div class="c" style="left:2295px;top:634px;width:124px;height:31px"><span style="left:4px;transform:scaleX(0.965);transform-origin:0 0">กรุงเทพมหานคร</span></div>
<div class="c" style="left:2421px;top:634px;width:114px;height:31px"><span style="left:0;right:0;text-align:center">10250</span></div>
<div class="c" style="left:40px;top:667px;width:154px;height:31px"><span style="left:0;right:0;text-align:center">0105569013643</span></div>
<div class="c" style="left:196px;top:667px;width:454px;height:31px"><span style="left:4px;transform:scaleX(0.965);transform-origin:0 0">บจ.วิลล์ แอนด์ โค คอมมูนิตี้ จำกัด</span></div>
<div class="c" style="left:652px;top:667px;width:124px;height:31px"><span style="left:0;right:0;text-align:center">20/1/2569</span></div>
<div class="c" style="left:778px;top:667px;width:154px;height:31px"><span style="right:2px">20,000,000</span></div>
<div class="c" style="left:934px;top:667px;width:124px;height:31px"><span style="left:0;right:0;text-align:center">96202</span></div>
<div class="c" style="left:1060px;top:667px;width:575px;height:31px"><span style="left:4px;transform:scaleX(0.965);transform-origin:0 0">ประกอบกิจการบริการซักผ้า โดยเครื่องซักผ้าชนิดหยอดเหรียญ</span></div>
<div class="c" style="left:1637px;top:667px;width:404px;height:31px"><span style="left:4px;transform:scaleX(0.965);transform-origin:0 0">59  ซอยริมคลองพระโขนง</span></div>
<div class="c" style="left:2043px;top:667px;width:124px;height:31px"><span style="left:4px;transform:scaleX(0.965);transform-origin:0 0">แขวงพระโขนงเหนือ</span></div>
<div class="c" style="left:2169px;top:667px;width:124px;height:31px"><span style="left:4px;transform:scaleX(0.965);transform-origin:0 0">เขตวัฒนา</span></div>
<div class="c" style="left:2295px;top:667px;width:124px;height:31px"><span style="left:4px;transform:scaleX(0.965);transform-origin:0 0">กรุงเทพมหานคร</span></div>
<div class="c" style="left:2421px;top:667px;width:114px;height:31px"><span style="left:0;right:0;text-align:center">10110</span></div>
<div class="c" style="left:40px;top:700px;width:154px;height:31px"><span style="left:0;right:0;text-align:center">0105569002021</span></div>
<div class="c" style="left:196px;top:700px;width:454px;height:31px"><span style="left:4px;transform:scaleX(0.965);transform-origin:0 0">บจ.เอ แอนด์ เจ แมนชั่น จำกัด</span></div>
<div class="c" style="left:652px;top:700px;width:124px;height:31px"><span style="left:0;right:0;text-align:center">1/6/2569</span></div>
<div class="c" style="left:778px;top:700px;width:154px;height:31px"><span style="right:2px">10,000,000</span></div>
<div class="c" style="left:934px;top:700px;width:124px;height:31px"><span style="left:0;right:0;text-align:center">68103</span></div>
<div class="c" style="left:1060px;top:700px;width:575px;height:31px"><span style="left:4px;transform:scaleX(0.965);transform-origin:0 0">ประกอบกิจการให้เช่าอาคาร อพาร์ตเมนต์ หอพัก ห้องพัก ที่อยู่อาศัย และอสังหาริมทรัพย์</span></div>
<div class="c" style="left:1637px;top:700px;width:404px;height:31px"><span style="left:4px;transform:scaleX(0.965);transform-origin:0 0">653/9  ซอย ฉลองกรุง1</span></div>
<div class="c" style="left:2043px;top:700px;width:124px;height:31px"><span style="left:4px;transform:scaleX(0.965);transform-origin:0 0">แขวงลาดกระบัง</span></div>
<div class="c" style="left:2169px;top:700px;width:124px;height:31px"><span style="left:4px;transform:scaleX(0.965);transform-origin:0 0">เขตลาดกระบัง</span></div>
<div class="c" style="left:2295px;top:700px;width:124px;height:31px"><span style="left:4px;transform:scaleX(0.965);transform-origin:0 0">กรุงเทพมหานคร</span></div>
<div class="c" style="left:2421px;top:700px;width:114px;height:31px"><span style="left:0;right:0;text-align:center">10520</span></div>
<div class="c" style="left:40px;top:733px;width:154px;height:31px"><span style="left:0;right:0;text-align:center">0105569007678</span></div>
<div class="c" style="left:196px;top:733px;width:454px;height:31px"><span style="left:4px;transform:scaleX(0.965);transform-origin:0 0">บจ.เมเปิ้ล นิว แมททีเรียล (ประเทศไทย) จำกัด</span></div>
<div class="c" style="left:652px;top:733px;width:124px;height:31px"><span style="left:0;right:0;text-align:center">13/1/2569</span></div>
<div class="c" style="left:778px;top:733px;width:154px;height:31px"><span style="right:2px">10,000,000</span></div>
<div class="c" style="left:934px;top:733px;width:124px;height:31px"><span style="left:0;right:0;text-align:center">22199</span></div>
<div class="c" style="left:1060px;top:733px;width:575px;height:31px"><span style="left:4px;transform:scaleX(0.965);transform-origin:0 0">ประกอบกิจการการผลิต แปรรูป ผสม พัฒนา วิจัย และจำหน่ายสารเติมแต่งยาง วัตถุดิบ</span></div>
<div class="c" style="left:1637px;top:733px;width:404px;height:31px"><span style="left:4px;transform:scaleX(0.965);transform-origin:0 0">46  ซอย ร่มเกล้า 56</span></div>
<div class="c" style="left:2043px;top:733px;width:124px;height:31px"><span style="left:4px;transform:scaleX(0.965);transform-origin:0 0">แขวงคลองสามประเวศ</span></div>
<div class="c" style="left:2169px;top:733px;width:124px;height:31px"><span style="left:4px;transform:scaleX(0.965);transform-origin:0 0">เขตลาดกระบัง</span></div>
<div class="c" style="left:2295px;top:733px;width:124px;height:31px"><span style="left:4px;transform:scaleX(0.965);transform-origin:0 0">กรุงเทพมหานคร</span></div>
<div class="c" style="left:2421px;top:733px;width:114px;height:31px"><span style="left:0;right:0;text-align:center">10520</span></div>
<div class="c" style="left:40px;top:766px;width:154px;height:31px"><span style="left:0;right:0;text-align:center">0105569011241</span></div>
<div class="c" style="left:196px;top:766px;width:454px;height:31px"><span style="left:4px;transform:scaleX(0.965);transform-origin:0 0">บจ.คัสตอมเฮ้าส์ ฮอสพิทอลลิตี้ จำกัด</span></div>
<div class="c" style="left:652px;top:766px;width:124px;height:31px"><span style="left:0;right:0;text-align:center">16/1/2569</span></div>
<div class="c" style="left:778px;top:766px;width:154px;height:31px"><span style="right:2px">10,000,000</span></div>
<div class="c" style="left:934px;top:766px;width:124px;height:31px"><span style="left:0;right:0;text-align:center">55101</span></div>
<div class="c" style="left:1060px;top:766px;width:575px;height:31px"><span style="left:4px;transform:scaleX(0.965);transform-origin:0 0">ประกอบกิจการศูนย์การค้า ห้างสรรพสินค้า คอมมูนิตี้ (Community) ตลาดสด โรงแรม อาคาร</span></div>
<div class="c" style="left:1637px;top:766px;width:404px;height:31px"><span style="left:4px;transform:scaleX(0.965);transform-origin:0 0">1000/9  อาคารบีทีเอส วิชันนารี ปาร์ค - เซาธ์ ทาวเวอร์  ห้องเลขที่</span></div>
<div class="c" style="left:2043px;top:766px;width:124px;height:31px"><span style="left:4px;transform:scaleX(0.965);transform-origin:0 0">แขวงจอมพล</span></div>
<div class="c" style="left:2169px;top:766px;width:124px;height:31px"><span style="left:4px;transform:scaleX(0.965);transform-origin:0 0">เขตจตุจักร</span></div>
<div class="c" style="left:2295px;top:766px;width:124px;height:31px"><span style="left:4px;transform:scaleX(0.965);transform-origin:0 0">กรุงเทพมหานคร</span></div>
<div class="c" style="left:2421px;top:766px;width:114px;height:31px"><span style="left:0;right:0;text-align:center">10900</span></div>
<div class="c" style="left:40px;top:799px;width:154px;height:31px"><span style="left:0;right:0;text-align:center">0105569012051</span></div>
<div class="c" style="left:196px;top:799px;width:454px;height:31px"><span style="left:4px;transform:scaleX(0.965);transform-origin:0 0">บจ.ว่านชิน อิเล็กทรอนิกส์ แอนด์ อิเล็กทริคอล แมนูแฟคเจอริ่ง (ไทยแลนด์) จำกัด</span></div>
<div class="c" style="left:652px;top:799px;width:124px;height:31px"><span style="left:0;right:0;text-align:center">16/1/2569</span></div>
<div class="c" style="left:778px;top:799px;width:154px;height:31px"><span style="right:2px">10,000,000</span></div>
<div class="c" style="left:934px;top:799px;width:124px;height:31px"><span style="left:0;right:0;text-align:center">27102</span></div>
<div class="c" style="left:1060px;top:799px;width:575px;height:31px"><span style="left:4px;transform:scaleX(0.965);transform-origin:0 0">ประกอบกิจการออกแบบ พัฒนา ผลิต จำหน่าย นำเข้าและส่งออก ตัวเหนี่ยวนำ รีแอคเตอร์</span></div>
<div class="c" style="left:1637px;top:799px;width:404px;height:31px"><span style="left:4px;transform:scaleX(0.965);transform-origin:0 0">324/35  อาคารบางนาเรสซิเดนซ์ (โซนสำนักงาน)  ห้องเลขที่</span></div>
<div class="c" style="left:2043px;top:799px;width:124px;height:31px"><span style="left:4px;transform:scaleX(0.965);transform-origin:0 0">แขวงบางนาเหนือ</span></div>
<div class="c" style="left:2169px;top:799px;width:124px;height:31px"><span style="left:4px;transform:scaleX(0.965);transform-origin:0 0">เขตบางนา</span></div>
<div class="c" style="left:2295px;top:799px;width:124px;height:31px"><span style="left:4px;transform:scaleX(0.965);transform-origin:0 0">กรุงเทพมหานคร</span></div>
<div class="c" style="left:2421px;top:799px;width:114px;height:31px"><span style="left:0;right:0;text-align:center">10260</span></div>
<div class="c" style="left:40px;top:832px;width:154px;height:31px"><span style="left:0;right:0;text-align:center">0105569012515</span></div>
<div class="c" style="left:196px;top:832px;width:454px;height:31px"><span style="left:4px;transform:scaleX(0.965);transform-origin:0 0">บจ.ฟิวเจอร่า โฮลดิ้ง  จำกัด</span></div>
<div class="c" style="left:652px;top:832px;width:124px;height:31px"><span style="left:0;right:0;text-align:center">19/1/2569</span></div>
<div class="c" style="left:778px;top:832px;width:154px;height:31px"><span style="right:2px">10,000,000</span></div>
<div class="c" style="left:934px;top:832px;width:124px;height:31px"><span style="left:0;right:0;text-align:center">55901</span></div>
<div class="c" style="left:1060px;top:832px;width:575px;height:31px"><span style="left:4px;transform:scaleX(0.965);transform-origin:0 0">ประกอบกิจการให้เช่าห้องพัก ให้เช่าห้องชุดสำนักงานทุกประเภท</span></div>
<div class="c" style="left:1637px;top:832px;width:404px;height:31px"><span style="left:4px;transform:scaleX(0.965);transform-origin:0 0">1249/206  อาคารเจมส์ ทาวเวอร์ ชั้นที่ 32 ถนนเจริญกรุง</span></div>
<div class="c" style="left:2043px;top:832px;width:124px;height:31px"><span style="left:4px;transform:scaleX(0.965);transform-origin:0 0">แขวงสุริยวงศ์</span></div>
<div class="c" style="left:2169px;top:832px;width:124px;height:31px"><span style="left:4px;transform:scaleX(0.965);transform-origin:0 0">เขตบางรัก</span></div>
<div class="c" style="left:2295px;top:832px;width:124px;height:31px"><span style="left:4px;transform:scaleX(0.965);transform-origin:0 0">กรุงเทพมหานคร</span></div>
<div class="c" style="left:2421px;top:832px;width:114px;height:31px"><span style="left:0;right:0;text-align:center">10500</span></div>
<div class="c" style="left:40px;top:865px;width:154px;height:31px"><span style="left:0;right:0;text-align:center">0105569014020</span></div>
<div class="c" style="left:196px;top:865px;width:454px;height:31px"><span style="left:4px;transform:scaleX(0.965);transform-origin:0 0">บจ.เค แซด ซี อินเตอร์เนชั่นแนล เทรดดิ้ง (ประเทศไทย) จำกัด</span></div>
<div class="c" style="left:652px;top:865px;width:124px;height:31px"><span style="left:0;right:0;text-align:center">20/1/2569</span></div>
<div class="c" style="left:778px;top:865px;width:154px;height:31px"><span style="right:2px">10,000,000</span></div>
<div class="c" style="left:934px;top:865px;width:124px;height:31px"><span style="left:0;right:0;text-align:center">61900</span></div>
<div class="c" style="left:1060px;top:865px;width:575px;height:31px"><span style="left:4px;transform:scaleX(0.965);transform-origin:0 0">ประกอบกิจการโทรคมนาคม พาณิชย์อิเล็กทรอนิกส์ ส่งออกและนำเข้าสินค้า ผ่านระบบออนไลน์</span></div>
<div class="c" style="left:1637px;top:865px;width:404px;height:31px"><span style="left:4px;transform:scaleX(0.965);transform-origin:0 0">19  ซอย นาคนิวาส 25 ถนนนาคนิวาส</span></div>
<div class="c" style="left:2043px;top:865px;width:124px;height:31px"><span style="left:4px;transform:scaleX(0.965);transform-origin:0 0">แขวงลาดพร้าว</span></div>
<div class="c" style="left:2169px;top:865px;width:124px;height:31px"><span style="left:4px;transform:scaleX(0.965);transform-origin:0 0">เขตลาดพร้าว</span></div>
<div class="c" style="left:2295px;top:865px;width:124px;height:31px"><span style="left:4px;transform:scaleX(0.965);transform-origin:0 0">กรุงเทพมหานคร</span></div>
<div class="c" style="left:2421px;top:865px;width:114px;height:31px"><span style="left:0;right:0;text-align:center">10230</span></div>
<div class="c" style="left:40px;top:898px;width:154px;height:31px"><span style="left:0;right:0;text-align:center">0105569018815</span></div>
<div class="c" style="left:196px;top:898px;width:454px;height:31px"><span style="left:4px;transform:scaleX(0.965);transform-origin:0 0">บจ.เฮลเลอร์มันน์ไทตัน (ประเทศไทย) จำกัด</span></div>
<div class="c" style="left:652px;top:898px;width:124px;height:31px"><span style="left:0;right:0;text-align:center">27/1/2569</span></div>
<div class="c" style="left:778px;top:898px;width:154px;height:31px"><span style="right:2px">10,000,000</span></div>
<div class="c" style="left:934px;top:898px;width:124px;height:31px"><span style="left:0;right:0;text-align:center">27320</span></div>
<div class="c" style="left:1060px;top:898px;width:575px;height:31px"><span style="left:4px;transform:scaleX(0.965);transform-origin:0 0">การผลิตและจำหน่ายสายเคเบิล ชิ้นส่วน ส่วนประกอบ และอื่นๆที่เกี่ยวข้อง</span></div>
<div class="c" style="left:1637px;top:898px;width:404px;height:31px"><span style="left:4px;transform:scaleX(0.965);transform-origin:0 0">5  อาคารสิทธิวรกิจ ชั้น 10  ห้องเลขที่ 103 ซอยพิพัฒน์ ถนนสีลม</span></div>
<div class="c" style="left:2043px;top:898px;width:124px;height:31px"><span style="left:4px;transform:scaleX(0.965);transform-origin:0 0">แขวงสีลม</span></div>
<div class="c" style="left:2169px;top:898px;width:124px;height:31px"><span style="left:4px;transform:scaleX(0.965);transform-origin:0 0">เขตบางรัก</span></div>
<div class="c" style="left:2295px;top:898px;width:124px;height:31px"><span style="left:4px;transform:scaleX(0.965);transform-origin:0 0">กรุงเทพมหานคร</span></div>
<div class="c" style="left:2421px;top:898px;width:114px;height:31px"><span style="left:0;right:0;text-align:center">10500</span></div>
<div class="c" style="left:40px;top:931px;width:154px;height:31px"><span style="left:0;right:0;text-align:center">0105569019951</span></div>
<div class="c" style="left:196px;top:931px;width:454px;height:31px"><span style="left:4px;transform:scaleX(0.965);transform-origin:0 0">บจ.คารัม อินเตอร์เทรด (ไทยแลนด์) จำกัด</span></div>
<div class="c" style="left:652px;top:931px;width:124px;height:31px"><span style="left:0;right:0;text-align:center">28/1/2569</span></div>
<div class="c" style="left:778px;top:931px;width:154px;height:31px"><span style="right:2px">10,000,000</span></div>
<div class="c" style="left:934px;top:931px;width:124px;height:31px"><span style="left:0;right:0;text-align:center">46316</span></div>
<div class="c" style="left:1060px;top:931px;width:575px;height:31px"><span style="left:4px;transform:scaleX(0.965);transform-origin:0 0">ประกอบกิจการจำหน่ายน้ำมันและไขมันจากพืชและสัตว์ทุกประเภท น้ำมันพืชบริโภค น้ำมัน</span></div>
<div class="c" style="left:1637px;top:931px;width:404px;height:31px"><span style="left:4px;transform:scaleX(0.965);transform-origin:0 0">111  อาคารอาคารเพียร์ 111 ชั้นที่ 19 ถนนราชดำริห์</span></div>
<div class="c" style="left:2043px;top:931px;width:124px;height:31px"><span style="left:4px;transform:scaleX(0.965);transform-origin:0 0">แขวงลุมพินี</span></div>
<div class="c" style="left:2169px;top:931px;width:124px;height:31px"><span style="left:4px;transform:scaleX(0.965);transform-origin:0 0">เขตปทุมวัน</span></div>
<div class="c" style="left:2295px;top:931px;width:124px;height:31px"><span style="left:4px;transform:scaleX(0.965);transform-origin:0 0">กรุงเทพมหานคร</span></div>
<div class="c" style="left:2421px;top:931px;width:114px;height:31px"><span style="left:0;right:0;text-align:center">10330</span></div>
<div class="c" style="left:40px;top:964px;width:154px;height:31px"><span style="left:0;right:0;text-align:center">0105569020020</span></div>
<div class="c" style="left:196px;top:964px;width:454px;height:31px"><span style="left:4px;transform:scaleX(0.965);transform-origin:0 0">บจ.ทราสตา ไพร์ม คอนซัลติ้ง จำกัด</span></div>
<div class="c" style="left:652px;top:964px;width:124px;height:31px"><span style="left:0;right:0;text-align:center">28/1/2569</span></div>
<div class="c" style="left:778px;top:964px;width:154px;height:31px"><span style="right:2px">10,000,000</span></div>
<div class="c" style="left:934px;top:964px;width:124px;height:31px"><span style="left:0;right:0;text-align:center">71102</span></div>
<div class="c" style="left:1060px;top:964px;width:575px;height:31px"><span style="left:4px;transform:scaleX(0.965);transform-origin:0 0">ประกอบกิจการรับเป็นที่ปรึกษาและให้คำแนะนำเกี่ยวกับด้านการบริหารงานและเทคนิค</span></div>
<div class="c" style="left:1637px;top:964px;width:404px;height:31px"><span style="left:4px;transform:scaleX(0.965);transform-origin:0 0">23/16  ถนนเลียบทางด่วน</span></div>
<div class="c" style="left:2043px;top:964px;width:124px;height:31px"><span style="left:4px;transform:scaleX(0.965);transform-origin:0 0">แขวงทุ่งครุ</span></div>
<div class="c" style="left:2169px;top:964px;width:124px;height:31px"><span style="left:4px;transform:scaleX(0.965);transform-origin:0 0">เขตทุ่งครุ</span></div>
<div class="c" style="left:2295px;top:964px;width:124px;height:31px"><span style="left:4px;transform:scaleX(0.965);transform-origin:0 0">กรุงเทพมหานคร</span></div>
<div class="c" style="left:2421px;top:964px;width:114px;height:31px"><span style="left:0;right:0;text-align:center">10140</span></div>
<div class="c" style="left:40px;top:997px;width:154px;height:31px"><span style="left:0;right:0;text-align:center">0105569003141</span></div>
<div class="c" style="left:196px;top:997px;width:454px;height:31px"><span style="left:4px;transform:scaleX(0.965);transform-origin:0 0">บจ.เอ็มเจเอ โฮลดิ้ง จำกัด</span></div>
<div class="c" style="left:652px;top:997px;width:124px;height:31px"><span style="left:0;right:0;text-align:center">1/8/2569</span></div>
<div class="c" style="left:778px;top:997px;width:154px;height:31px"><span style="right:2px">8,111,800</span></div>
<div class="c" style="left:934px;top:997px;width:124px;height:31px"><span style="left:0;right:0;text-align:center">64201</span></div>
<div class="c" style="left:1060px;top:997px;width:575px;height:31px"><span style="left:4px;transform:scaleX(0.965);transform-origin:0 0">ประกอบกิจการเข้าเป็นหุ้นส่วนจำกัดความรับผิดชอบในห้างหุ้นส่วนและเป็นผู้ถือหุ้นในบริษัท</span></div>
<div class="c" style="left:1637px;top:997px;width:404px;height:31px"><span style="left:4px;transform:scaleX(0.965);transform-origin:0 0">17/290  ซอย ประชาชื่น 14 (ม.การไฟฟ้าส่วนภูมิภาค)</span></div>
<div class="c" style="left:2043px;top:997px;width:124px;height:31px"><span style="left:4px;transform:scaleX(0.965);transform-origin:0 0">แขวงทุ่งสองห้อง</span></div>
<div class="c" style="left:2169px;top:997px;width:124px;height:31px"><span style="left:4px;transform:scaleX(0.965);transform-origin:0 0">เขตหลักสี่</span></div>
<div class="c" style="left:2295px;top:997px;width:124px;height:31px"><span style="left:4px;transform:scaleX(0.965);transform-origin:0 0">กรุงเทพมหานคร</span></div>
<div class="c" style="left:2421px;top:997px;width:114px;height:31px"><span style="left:0;right:0;text-align:center">10210</span></div>
<div class="c" style="left:40px;top:1030px;width:154px;height:31px"><span style="left:0;right:0;text-align:center">0105569009018</span></div>
<div class="c" style="left:196px;top:1030px;width:454px;height:31px"><span style="left:4px;transform:scaleX(0.965);transform-origin:0 0">บจ.เอ็กซ์ไซเอนซ์ (ประเทศไทย) จำกัด</span></div>
<div class="c" style="left:652px;top:1030px;width:124px;height:31px"><span style="left:0;right:0;text-align:center">14/1/2569</span></div>
<div class="c" style="left:778px;top:1030px;width:154px;height:31px"><span style="right:2px">8,000,000</span></div>
<div class="c" style="left:934px;top:1030px;width:124px;height:31px"><span style="left:0;right:0;text-align:center">46521</span></div>
<div class="c" style="left:1060px;top:1030px;width:575px;height:31px"><span style="left:4px;transform:scaleX(0.965);transform-origin:0 0">ประกอบกิจการนำเข้า ส่งออก และจัดจำหน่ายวัตถุดิบสำหรับอุตสาหกรรมประกอบและผลิต</span></div>
<div class="c" style="left:1637px;top:1030px;width:404px;height:31px"><span style="left:4px;transform:scaleX(0.965);transform-origin:0 0">63/723  อาคารศุภาลัย ไอคอน สาทร  ห้องเลขที่ S-319 ยูนิต</span></div>
<div class="c" style="left:2043px;top:1030px;width:124px;height:31px"><span style="left:4px;transform:scaleX(0.965);transform-origin:0 0">แขวงทุ่งมหาเมฆ</span></div>
<div class="c" style="left:2169px;top:1030px;width:124px;height:31px"><span style="left:4px;transform:scaleX(0.965);transform-origin:0 0">เขตสาทร</span></div>
<div class="c" style="left:2295px;top:1030px;width:124px;height:31px"><span style="left:4px;transform:scaleX(0.965);transform-origin:0 0">กรุงเทพมหานคร</span></div>
<div class="c" style="left:2421px;top:1030px;width:114px;height:31px"><span style="left:0;right:0;text-align:center">10120</span></div>
<div class="ab" style="left:38px;top:29px;width:159px;height:45px;border:2px solid #1e6b41"></div>
<div class="ab" style="left:40px;top:31px;width:155px;height:41px;border:1px solid #fff"></div>
<div class="ab" style="left:192px;top:69px;width:7px;height:7px;background:#1e6b41;border:1px solid #fff"></div>
<div class="ab" style="left:2453px;top:35px;width:76px;height:28px;background:#fff;border:1px solid #c8c8c8"></div>
<svg style="left:2458px;top:38px" width="22" height="22" viewBox="0 0 22 22"><rect x="1" y="4" width="12" height="17" fill="#e8c48a"/><path d="M4 4 V2 H10 V4" fill="none" stroke="#777" stroke-width="1.2"/><rect x="3" y="3" width="8" height="3" fill="#fff" stroke="#777" stroke-width="1"/><path d="M8 10 H15 L19 14 V21 H8 Z" fill="#fff" stroke="#555" stroke-width="1.1"/></svg>
<div class="t" style="left:2480px;top:41px;font-size:15px;color:#333">(Ctrl)</div>
<svg style="left:2516px;top:47px" width="8" height="5" viewBox="0 0 8 5"><path d="M0 0 H8 L4 4.5 Z" fill="#444"/></svg>
</div>
<div class="ab" style="left:2535px;top:269px;width:25px;height:1044px;background:#f6f6f6;border-radius:9px 9px 0 0"></div>
<svg style="left:2542px;top:276px;" width="11" height="7" viewBox="0 0 11 7"><path d="M0 7 L5.5 0 L11 7 Z" fill="#6e6e6e"/></svg>
<div class="ab" style="left:2542px;top:290px;width:11px;height:21px;background:#777;border-radius:6px"></div>
<svg style="left:2542px;top:1301px;" width="11" height="7" viewBox="0 0 11 7"><path d="M0 0 L5.5 7 L11 0 Z" fill="#6e6e6e"/></svg>
<div class="ab" style="left:0px;top:1313px;width:2560px;height:40px;background:#f0f0f0"></div>
<svg style="left:31px;top:1325px;" width="8" height="14" viewBox="0 0 8 14"><path d="M7 1 L1 7 L7 13" fill="none" stroke="#999" stroke-width="1.2"/></svg>
<svg style="left:72px;top:1325px;" width="8" height="14" viewBox="0 0 8 14"><path d="M1 1 L7 7 L1 13" fill="none" stroke="#999" stroke-width="1.2"/></svg>
<div class="ab" style="left:141px;top:1313px;width:84px;height:35px;background:#fff;border-radius:0 0 6px 6px;box-shadow:0 1px 2px rgba(0,0,0,0.1)"></div>
<div id="t64" class="t" style="left:151px;top:1325px;font-size:19px;color:#1f1f1f;font-weight:normal;transform:scaleX(0.9062);transform-origin:0 0;"><span style='font-size:15px;font-weight:bold'>ม.ค.</span>2569</div>
<div class="ab" style="left:151px;top:1343px;width:64px;height:2px;background:#107c41"></div>
<div class="ab" style="left:230px;top:1322px;width:1px;height:24px;background:#c8c8c8"></div>
<div id="t65" class="t" style="left:283px;top:1321px;font-size:22px;color:#444;font-weight:normal;">+</div>
<svg style="left:1537px;top:1325px;" width="4" height="14" viewBox="0 0 4 14"><circle cx="2" cy="2" r="1.3" fill="#999"/><circle cx="2" cy="7" r="1.3" fill="#999"/><circle cx="2" cy="12" r="1.3" fill="#999"/></svg>
<div class="ab" style="left:1558px;top:1322px;width:982px;height:22px;background:#f6f6f6;border-radius:11px"></div>
<svg style="left:1565px;top:1327px;" width="8" height="11" viewBox="0 0 8 11"><path d="M8 0 L0 5.5 L8 11 Z" fill="#6e6e6e"/></svg>
<div class="ab" style="left:1581px;top:1327px;width:850px;height:11px;background:#737373;border-radius:6px"></div>
<svg style="left:2521px;top:1327px;" width="8" height="11" viewBox="0 0 8 11"><path d="M0 0 L8 5.5 L0 11 Z" fill="#6e6e6e"/></svg>
<div class="ab" style="left:0px;top:1353px;width:2560px;height:27px;background:#f5f5f5;border-top:1px solid #fff"></div>
<div id="t66" class="t" style="left:9px;top:1361px;font-size:13px;color:#333;font-weight:normal;transform:scaleX(0.8775);transform-origin:0 0;">เลือกปลายทางแล้วกด ENTER หรือเลือก 'วาง'</div>
<div class="ab" style="left:2188px;top:1353px;width:50px;height:27px;background:#e0e0e0"></div>
<svg style="left:2202px;top:1358px;" width="20" height="17" viewBox="0 0 20 17"><path d="M1 1 H19 V16 H1 Z M1 6 H19 M1 11 H19 M7 1 V16 M13 1 V16" fill="none" stroke="#333" stroke-width="1.3"/></svg>
<svg style="left:2254px;top:1358px;" width="19" height="17" viewBox="0 0 19 17"><rect x="1" y="1" width="17" height="15" fill="none" stroke="#333" stroke-width="1.3"/><rect x="5" y="3.5" width="9" height="10" fill="none" stroke="#333" stroke-width="1.1"/><path d="M7 6.5 H12 M7 9 H12 M7 11.5 H12" stroke="#333" stroke-width="1"/></svg>
<svg style="left:2304px;top:1358px;" width="19" height="17" viewBox="0 0 19 17"><path d="M1 1 H18 V16 H1 Z M1 9 H11 V1 M6 1 V9" fill="none" stroke="#333" stroke-width="1.3"/></svg>
<div class="ab" style="left:2344px;top:1366px;width:10px;height:1.2px;background:#444"></div>
<div class="ab" style="left:2360px;top:1366px;width:125px;height:1px;background:#aaa"></div>
<div class="ab" style="left:2421px;top:1359px;width:5px;height:15px;background:#444;border-radius:1px"></div>
<div id="t67" class="t" style="left:2490px;top:1357px;font-size:17px;color:#444;font-weight:normal;">+</div>
<div id="t68" class="t" style="left:2519px;top:1359px;font-size:13px;color:#333;font-weight:normal;transform:scaleX(0.9323);transform-origin:0 0;">100%</div>
</body></html>
